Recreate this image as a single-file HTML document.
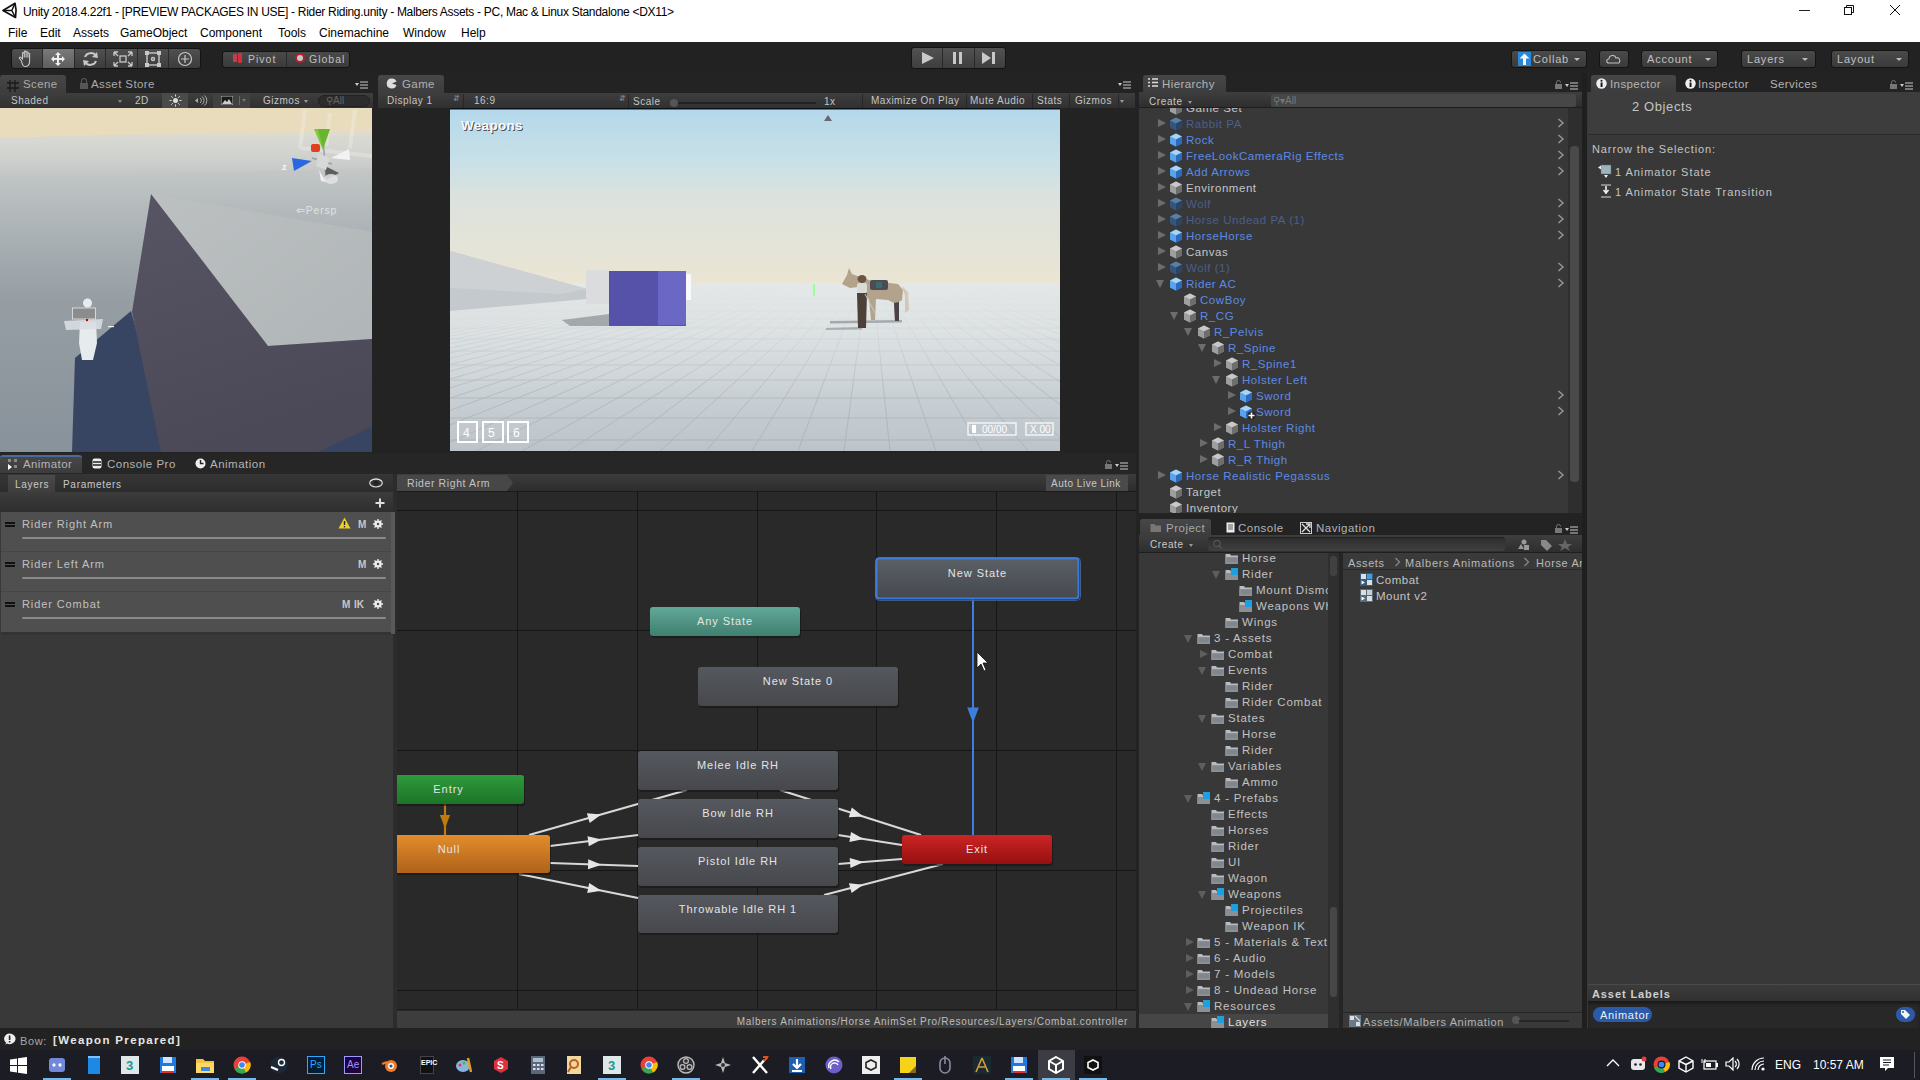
<!DOCTYPE html>
<html><head><meta charset="utf-8">
<style>
*{margin:0;padding:0;box-sizing:border-box}
html,body{width:1920px;height:1080px;overflow:hidden;background:#232323;font-family:"Liberation Sans",sans-serif;font-size:11px;color:#bdbdbd}
.a{position:absolute}
.t{position:absolute;white-space:nowrap;line-height:1}
#title{left:0;top:0;width:1920px;height:22px;background:#fff}
#menu{left:0;top:22px;width:1920px;height:20px;background:#fff}
#toolbar{left:0;top:42px;width:1920px;height:31px;background:#222}
.btn{position:absolute;background:linear-gradient(#4a4a4a,#3a3a3a);border:1px solid #141414;border-radius:3px}
.tab{position:absolute;background:linear-gradient(#444,#383838);border-radius:3px 3px 0 0}
.hrow{position:absolute;height:16px;line-height:19px;white-space:nowrap;font-size:11.5px;letter-spacing:0.55px}
.prow{letter-spacing:0.78px}
.blue{color:#5a8ae6}
.dim{color:#4e6494}
.cube{position:absolute;width:12px;height:12px}
.tri{position:absolute;width:0;height:0}
</style></head><body>

<!-- TITLE BAR -->
<div class="a" id="title">
  <svg class="a" style="left:0;top:0" width="20" height="22"><path d="M3 10.5 L15 3.3 Q17 10.5 15.5 17.5 Z" fill="none" stroke="#111" stroke-width="1.7" stroke-linejoin="round"/><path d="M3 10.5 H11.8 L15 3.3 M11.8 10.5 L15.5 17.5" fill="none" stroke="#111" stroke-width="1.5"/></svg>
  <div class="t" style="left:23px;top:6px;font-size:12px;letter-spacing:-0.3px;color:#000">Unity 2018.4.22f1 - [PREVIEW PACKAGES IN USE] - Rider Riding.unity - Malbers Assets - PC, Mac &amp; Linux Standalone &lt;DX11&gt;</div>
  <div class="a" style="left:1799px;top:10px;width:11px;height:1px;background:#222"></div>
  <svg class="a" style="left:1843px;top:4px" width="12" height="12"><rect x="1.5" y="3.5" width="7" height="7" fill="none" stroke="#111" stroke-width="1"/><path d="M3.5 3.5 V1.5 H10.5 V8.5 H8.5" fill="none" stroke="#111" stroke-width="1"/></svg>
  <svg class="a" style="left:1889px;top:4px" width="12" height="12"><path d="M1 1 L11 11 M11 1 L1 11" stroke="#111" stroke-width="1"/></svg>
</div>
<!-- MENU -->
<div class="a" id="menu">
  <div class="t" style="left:8px;top:5px;font-size:12px;color:#000">File</div>
  <div class="t" style="left:40px;top:5px;font-size:12px;color:#000">Edit</div>
  <div class="t" style="left:73px;top:5px;font-size:12px;color:#000">Assets</div>
  <div class="t" style="left:120px;top:5px;font-size:12px;color:#000">GameObject</div>
  <div class="t" style="left:200px;top:5px;font-size:12px;color:#000">Component</div>
  <div class="t" style="left:278px;top:5px;font-size:12px;color:#000">Tools</div>
  <div class="t" style="left:319px;top:5px;font-size:12px;color:#000">Cinemachine</div>
  <div class="t" style="left:403px;top:5px;font-size:12px;color:#000">Window</div>
  <div class="t" style="left:461px;top:5px;font-size:12px;color:#000">Help</div>
</div>
<!-- TOOLBAR -->
<div class="a" id="toolbar">
  <!-- tools group -->
  <div class="btn" style="left:11px;top:6px;width:190px;height:21px;background:linear-gradient(#505050,#3c3c3c)"></div>
  <div class="a" style="left:43px;top:7px;width:31px;height:19px;background:linear-gradient(#7a7a7a,#5e5e5e)"></div>
  <div class="a" style="left:42px;top:7px;width:1px;height:19px;background:#2a2a2a"></div>
  <div class="a" style="left:74px;top:7px;width:1px;height:19px;background:#2a2a2a"></div>
  <div class="a" style="left:105px;top:7px;width:1px;height:19px;background:#2a2a2a"></div>
  <div class="a" style="left:137px;top:7px;width:1px;height:19px;background:#2a2a2a"></div>
  <div class="a" style="left:168px;top:7px;width:1px;height:19px;background:#2a2a2a"></div>
  <svg class="a" style="left:16px;top:7px" width="180" height="20" viewBox="0 0 180 20">
    <g fill="none" stroke="#c8c8c8" stroke-width="1.1">
      <path d="M5.5 12 L3.5 9.5 C2.8 8.6 4 7.6 4.8 8.4 L6.5 10 L6.5 4.5 C6.5 3.3 8.3 3.3 8.3 4.5 L8.3 8.5 L8.3 3 C8.3 1.8 10.1 1.8 10.1 3 L10.1 8.5 L10.1 3.6 C10.1 2.4 11.9 2.4 11.9 3.6 L11.9 8.8 L11.9 5 C11.9 3.9 13.6 3.9 13.6 5 L13.6 12 C13.6 15.5 11.5 17.5 9 17.5 C7.2 17.5 6.3 16.3 5.5 12Z"/></g>
    <path fill="#eee" transform="translate(-5 0)" d="M40 10 L43 7 L43 9 L46 9 L46 6 L44 6 L47 3 L50 6 L48 6 L48 9 L51 9 L51 7 L54 10 L51 13 L51 11 L48 11 L48 14 L50 14 L47 17 L44 14 L46 14 L46 11 L43 11 L43 13Z"/>
    <g transform="translate(-4 0)"><g fill="none" stroke="#c8c8c8" stroke-width="2"><path d="M73 8 A6 5.5 0 0 1 84 7"/><path d="M84 12 A6 5.5 0 0 1 73 13"/></g>
    <path fill="#c8c8c8" d="M85 3 L86 9 L80 8Z M72 17 L71 11 L77 12Z"/></g>
    <g fill="none" stroke="#c8c8c8" stroke-width="1.3"><rect x="104" y="7" width="6" height="6"/><path d="M98 3 L102 3 M98 3 L98 7 M98 3 L102 7 M116 3 L112 3 M116 3 L116 7 M116 3 L112 7 M98 17 L102 17 M98 17 L98 13 M98 17 L102 13 M116 17 L112 17 M116 17 L116 13 M116 17 L112 13"/></g>
    <g fill="none" stroke="#c8c8c8" stroke-width="1.4"><rect x="131" y="4" width="12" height="12"/><circle cx="137" cy="10" r="1.5"/></g>
    <g fill="#c8c8c8"><rect x="129" y="2" width="4" height="4"/><rect x="141" y="2" width="4" height="4"/><rect x="129" y="14" width="4" height="4"/><rect x="141" y="14" width="4" height="4"/></g>
    <g fill="none" stroke="#c8c8c8" stroke-width="1.2"><circle cx="169" cy="10" r="6.5"/><path d="M169 6 L169 14 M165 10 L173 10"/></g>
  </svg>
  <!-- pivot global -->
  <div class="btn" style="left:222px;top:9px;width:128px;height:17px"></div>
  <div class="a" style="left:286px;top:10px;width:1px;height:15px;background:#2a2a2a"></div>
  <div class="a" style="left:233px;top:12px;width:4px;height:8px;background:#c04050;border-radius:1px"></div>
  <div class="a" style="left:238px;top:11px;width:4px;height:10px;background:#d03040;border-radius:1px"></div>
  <div class="t" style="left:248px;top:12px;font-size:10.5px;color:#c0c0c0;letter-spacing:1px">Pivot</div>
  <div class="a" style="left:295px;top:11px;width:10px;height:10px;border-radius:50%;background:#c8c8c8;border:2px solid #b02030"></div>
  <div class="t" style="left:309px;top:12px;font-size:10.5px;color:#c0c0c0;letter-spacing:1px">Global</div>
  <!-- play -->
  <div class="btn" style="left:911px;top:5px;width:95px;height:22px;background:linear-gradient(#525252,#3e3e3e)"></div>
  <div class="a" style="left:942px;top:6px;width:1px;height:20px;background:#2a2a2a"></div>
  <div class="a" style="left:974px;top:6px;width:1px;height:20px;background:#2a2a2a"></div>
  <svg class="a" style="left:911px;top:5px" width="95" height="22"><path d="M11 5 L23 11 L11 17Z" fill="#c8c8c8"/><rect x="42" y="5" width="3" height="12" fill="#c8c8c8"/><rect x="48" y="5" width="3" height="12" fill="#c8c8c8"/><path d="M71 5 L80 11 L71 17Z" fill="#c8c8c8"/><rect x="81" y="5" width="3" height="12" fill="#c8c8c8"/></svg>
  <!-- right buttons -->
  <div class="btn" style="left:1511px;top:8px;width:76px;height:18px"></div>
  <svg class="a" style="left:1518px;top:10px" width="13" height="14"><rect x="0" y="0" width="13" height="14" fill="#2a86d6"/><path d="M6.5 1.5 L11.5 6.5 L8 6.5 L8 13 L5 13 L5 6.5 L1.5 6.5Z" fill="#f4f8fc"/></svg>
  <div class="t" style="left:1533px;top:12px;font-size:11px;color:#c0c0c0;letter-spacing:0.8px">Collab</div>
  <div class="tri" style="left:1574px;top:16px;border-left:3px solid transparent;border-right:3px solid transparent;border-top:3px solid #bbb"></div>
  <div class="btn" style="left:1599px;top:8px;width:30px;height:18px"></div>
  <svg class="a" style="left:1604px;top:10px" width="20" height="14"><path d="M5 11 C2 11 2 7 5 7 C5 3 11 2 12 6 C15 5 17 8 15 11Z" fill="none" stroke="#c0c0c0" stroke-width="1.1"/></svg>
  <div class="btn" style="left:1641px;top:8px;width:77px;height:18px"></div>
  <div class="t" style="left:1647px;top:12px;font-size:11px;color:#c0c0c0;letter-spacing:0.8px">Account</div>
  <div class="tri" style="left:1705px;top:16px;border-left:3px solid transparent;border-right:3px solid transparent;border-top:3px solid #bbb"></div>
  <div class="btn" style="left:1741px;top:8px;width:75px;height:18px"></div>
  <div class="t" style="left:1747px;top:12px;font-size:11px;color:#c0c0c0;letter-spacing:0.8px">Layers</div>
  <div class="tri" style="left:1802px;top:16px;border-left:3px solid transparent;border-right:3px solid transparent;border-top:3px solid #bbb"></div>
  <div class="btn" style="left:1831px;top:8px;width:78px;height:18px"></div>
  <div class="t" style="left:1837px;top:12px;font-size:11px;color:#c0c0c0;letter-spacing:0.8px">Layout</div>
  <div class="tri" style="left:1896px;top:16px;border-left:3px solid transparent;border-right:3px solid transparent;border-top:3px solid #bbb"></div>
</div>

<!-- SCENE PANEL -->
<div class="a" style="left:0;top:73px;width:373px;height:380px;background:#232323">
  <div class="tab" style="left:0;top:2px;width:66px;height:19px;background:linear-gradient(#474747,#3c3c3c)"></div>
  <svg class="a" style="left:7px;top:7px" width="12" height="12"><path d="M3 0 V12 M8 0 V12 M0 3 H12 M0 8 H12" stroke="#1a1a1a" stroke-width="1.3"/></svg>
  <div class="t" style="left:23px;top:6px;font-size:11.5px;color:#aaa;letter-spacing:0.4px">Scene</div>
  <svg class="a" style="left:79px;top:5px" width="10" height="11"><rect x="1" y="5" width="8" height="6" fill="#555"/><path d="M2.5 5 V3 A2.5 2.5 0 0 1 7.5 3 V5" fill="none" stroke="#555" stroke-width="1.2"/></svg>
  <div class="t" style="left:91px;top:6px;font-size:11.5px;color:#aaa;letter-spacing:0.4px">Asset Store</div>
  <svg class="a" style="left:355px;top:8px" width="14" height="8"><path d="M0 2 L4 2 L2 5Z" fill="#ccc"/><path d="M5 1 H13 M5 4 H13 M5 7 H13" stroke="#ccc" stroke-width="1.2"/></svg>
  <!-- scene toolbar -->
  <div class="a" style="left:0;top:20px;width:373px;height:15px;background:linear-gradient(#3e3e3e,#303030)"></div>
  <div class="t" style="left:11px;top:23px;font-size:10px;color:#c4c4c4;letter-spacing:0.5px">Shaded</div>
  <div class="tri" style="left:118px;top:27px;border-left:2.5px solid transparent;border-right:2.5px solid transparent;border-top:3px solid #888"></div>
  <div class="t" style="left:135px;top:23px;font-size:10px;color:#c4c4c4;letter-spacing:0.5px">2D</div>
  <div class="a" style="left:162px;top:20px;width:26px;height:15px;background:#4a4a4a"></div>
  <svg class="a" style="left:169px;top:21px" width="13" height="13"><circle cx="6.5" cy="6.5" r="2.5" fill="#ddd"/><path d="M6.5 0.5 V2.5 M6.5 10.5 V12.5 M0.5 6.5 H2.5 M10.5 6.5 H12.5 M2.3 2.3 L3.7 3.7 M9.3 9.3 L10.7 10.7 M2.3 10.7 L3.7 9.3 M9.3 3.7 L10.7 2.3" stroke="#ddd" stroke-width="1"/></svg>
  <svg class="a" style="left:194px;top:22px" width="14" height="11"><path d="M1 5.5 L4 3 V8Z" fill="#aaa"/><path d="M6 3 A3 3 0 0 1 6 8 M8 1.5 A5 5 0 0 1 8 9.5 M10.5 0.5 A6.5 6.5 0 0 1 10.5 10.5" fill="none" stroke="#aaa" stroke-width="1"/></svg>
  <div class="a" style="left:213px;top:20px;width:37px;height:15px;background:#414141"></div>
  <svg class="a" style="left:221px;top:23px" width="12" height="9"><rect x="0" y="0" width="12" height="9" fill="#1a1a1a" stroke="#bbb" stroke-width="1"/><path d="M1 8 L4 4 L6 6 L8 3 L11 8Z" fill="#ccc"/></svg>
  <div class="a" style="left:239px;top:23px;width:1px;height:9px;background:#666"></div>
  <div class="tri" style="left:242px;top:26px;border-left:2.5px solid transparent;border-right:2.5px solid transparent;border-top:3px solid #777"></div>
  <div class="t" style="left:263px;top:23px;font-size:10px;color:#c4c4c4;letter-spacing:0.5px">Gizmos</div>
  <div class="tri" style="left:304px;top:27px;border-left:2.5px solid transparent;border-right:2.5px solid transparent;border-top:3px solid #999"></div>
  <div class="a" style="left:318px;top:22px;width:52px;height:12px;background:#2c2c2c;border-radius:6px;border:1px solid #222"></div>
  <div class="t" style="left:326px;top:23px;font-size:10px;color:#666">&#9906;All</div>
</div>
<!-- scene view -->
<svg class="a" style="left:0;top:108px" width="372" height="344" viewBox="0 0 372 344">
  <defs>
    <linearGradient id="sky" x1="0" y1="0" x2="0" y2="1">
      <stop offset="0" stop-color="#e9ddbd"/><stop offset="0.07" stop-color="#e8dcc0"/><stop offset="0.085" stop-color="#d4d6d2"/><stop offset="0.2" stop-color="#c0c4c4"/><stop offset="0.4" stop-color="#a6aeb2"/><stop offset="0.56" stop-color="#969ea4"/><stop offset="1" stop-color="#88929a"/>
    </linearGradient>
    <linearGradient id="topf" x1="0" y1="0" x2="1" y2="1"><stop offset="0" stop-color="#bcc0c1"/><stop offset="1" stop-color="#b0b5b7"/></linearGradient><linearGradient id="darkf" x1="0" y1="0" x2="0.3" y2="1"><stop offset="0" stop-color="#575563"/><stop offset="1" stop-color="#4b4957"/></linearGradient>
  </defs>
  <rect width="373" height="344" fill="url(#sky)"/>
  <polygon points="0,0 373,0 373,19.5 0,30" fill="#e8dcbc"/>
  <linearGradient id="haze" x1="0" y1="0" x2="0" y2="1"><stop offset="0" stop-color="#dcdcd4"/><stop offset="1" stop-color="#dcdcd4" stop-opacity="0"/></linearGradient>
  <polygon points="0,30 373,23 373,60 0,70" fill="url(#haze)" opacity="0.6"/>
  <polygon points="151,86 373,124 373,231 268,238" fill="url(#topf)"/>
  <polygon points="131,203 170,344 72,344 75,250" fill="#374563"/>
  <polygon points="151,86 268,238 373,231 373,344 161,344 132,204" fill="url(#darkf)"/>
  <polygon points="318,344 373,318 373,344" fill="#374563"/>
  <!-- character -->
  <ellipse cx="87.5" cy="195" rx="4.5" ry="4.5" fill="#e8ecee"/>
  <path d="M80 214 L96 214 L97 235 L93 252 L82 252 L79 235Z" fill="#e6ecee"/>
  <polygon points="64,213 103,211 101,221 66,222" fill="#d8dee2" opacity="0.9"/>
  <rect x="72.5" y="200" width="23" height="11" fill="#8c8c8c" stroke="#e8e8e8" stroke-width="0.8"/>
  <circle cx="87" cy="212" r="1.2" fill="#b00"/>
  <rect x="108" y="218" width="6" height="1.2" fill="#f0f0f0"/>
  <!-- gizmo -->
  <path d="M305 2 L300 40 M330 5 L326 38 M355 2 L350 40 M300 40 L373 48" stroke="#f4f2ea" stroke-width="4" fill="none" opacity="0.35"/>
  <path d="M323 30 L326 70 M312 50 L332 56" stroke="#9aa0a4" stroke-width="1.5"/>
  <polygon points="314,21 330,21 323,42" fill="#7ec83a"/>
  <polygon points="318,21 330,21 323,40" fill="#5aa828" opacity="0.6"/>
  <rect x="311" y="36" width="9" height="8" rx="2" fill="#e0401c"/>
  <polygon points="292,50 312,53 294,63" fill="#2a68e0"/>
  <polygon points="331,50 349,41 350,52" fill="#f2f2f2"/>
  <polygon points="325,58 339,65 326,72" fill="#5e5e5e"/>
  <polygon points="319,62 326,74 321,73" fill="#f0f0f0"/>
  <ellipse cx="331" cy="71" rx="7" ry="5" fill="#e4e4e4" opacity="0.85"/>
  <polygon points="318,45 330,50 326,62 316,58" fill="#d6d8da"/>
  <text x="282" y="62" font-size="9" font-weight="bold" fill="#f4f4f4" font-family="Liberation Sans">z</text>
  <text x="296" y="106" font-size="10.5" fill="#dfe2e4" letter-spacing="0.8" font-family="Liberation Sans">&#8656;Persp</text>
</svg>

<!-- GAME PANEL -->
<div class="a" style="left:378px;top:73px;width:757px;height:380px;background:#232323">
  <div class="tab" style="left:0;top:2px;width:66px;height:19px;background:linear-gradient(#474747,#3c3c3c)"></div>
  <svg class="a" style="left:8px;top:5px" width="11" height="11"><path d="M5.5 0.5 A5 5 0 1 0 10.5 7 L6 5.5 L10.5 3.5 A5 5 0 0 0 5.5 0.5Z" fill="#ddd"/></svg>
  <div class="t" style="left:24px;top:6px;font-size:11.5px;color:#b0b0b0;letter-spacing:0.4px">Game</div>
  <svg class="a" style="left:740px;top:8px" width="14" height="8"><path d="M0 2 L4 2 L2 5Z" fill="#ccc"/><path d="M5 1 H13 M5 4 H13 M5 7 H13" stroke="#ccc" stroke-width="1.2"/></svg>
  <div class="a" style="left:0;top:20px;width:757px;height:15px;background:linear-gradient(#3e3e3e,#303030)"></div>
  <div class="t" style="left:9px;top:23px;font-size:10px;color:#c4c4c4;letter-spacing:0.5px">Display 1</div>
  <div class="t" style="left:75px;top:22px;font-size:8px;color:#888">&#8693;</div>
  <div class="t" style="left:96px;top:23px;font-size:10px;color:#c4c4c4;letter-spacing:0.5px">16:9</div>
  <div class="t" style="left:241px;top:22px;font-size:8px;color:#888">&#8693;</div>
  <div class="t" style="left:255px;top:24px;font-size:10px;color:#c4c4c4;letter-spacing:0.5px">Scale</div>
  <div class="a" style="left:292px;top:26px;width:8px;height:8px;border-radius:50%;background:#555"></div>
  <div class="a" style="left:300px;top:29px;width:138px;height:2px;background:#222"></div>
  <div class="t" style="left:446px;top:24px;font-size:10px;color:#c4c4c4;letter-spacing:0.5px">1x</div>
  <div class="t" style="left:493px;top:23px;font-size:10px;color:#c4c4c4;letter-spacing:0.5px">Maximize On Play</div>
  <div class="t" style="left:592px;top:23px;font-size:10px;color:#c4c4c4;letter-spacing:0.5px">Mute Audio</div>
  <div class="t" style="left:659px;top:23px;font-size:10px;color:#c4c4c4;letter-spacing:0.5px">Stats</div>
  <div class="t" style="left:697px;top:23px;font-size:10px;color:#c4c4c4;letter-spacing:0.5px">Gizmos</div>
  <div class="tri" style="left:742px;top:27px;border-left:2.5px solid transparent;border-right:2.5px solid transparent;border-top:3px solid #999"></div>
<div class="a" style="left:85px;top:21px;width:1px;height:14px;background:#262626"></div><div class="a" style="left:250px;top:21px;width:1px;height:14px;background:#262626"></div><div class="a" style="left:484px;top:21px;width:1px;height:14px;background:#262626"></div><div class="a" style="left:588px;top:21px;width:1px;height:14px;background:#262626"></div><div class="a" style="left:654px;top:21px;width:1px;height:14px;background:#262626"></div><div class="a" style="left:691px;top:21px;width:1px;height:14px;background:#262626"></div><div class="a" style="left:740px;top:21px;width:1px;height:14px;background:#262626"></div>
</div>
<!-- game view -->
<svg class="a" style="left:450px;top:108px" width="610" height="343" viewBox="0 0 610 343">
  <defs>
    <linearGradient id="gsky" x1="0" y1="0" x2="0" y2="1">
      <stop offset="0" stop-color="#b3d8ea"/><stop offset="0.3" stop-color="#c8e0e8"/><stop offset="0.5" stop-color="#dbe2de"/><stop offset="0.5" stop-color="#dbe2de"/><stop offset="1" stop-color="#ebe5d3"/>
    </linearGradient>
    <linearGradient id="ground" x1="0" y1="0" x2="0" y2="1">
      <stop offset="0" stop-color="#e2e6e6"/><stop offset="0.3" stop-color="#d8dddf"/><stop offset="1" stop-color="#bcc4ca"/>
    </linearGradient>
    <clipPath id="gclip"><rect x="0" y="176" width="610" height="167"/></clipPath>
  </defs>
  <rect width="610" height="176" fill="url(#gsky)"/>
  <rect y="175" width="610" height="168" fill="url(#ground)"/>
  <g clip-path="url(#gclip)" stroke="#98a0a6" fill="none" opacity="0.5" stroke-width="0.8">
    <path d="M420 150 L-1400 343 M420 150 L-1354 343 M420 150 L-1308 343 M420 150 L-1262 343 M420 150 L-1216 343 M420 150 L-1170 343 M420 150 L-1124 343 M420 150 L-1078 343 M420 150 L-1032 343 M420 150 L-986 343 M420 150 L-940 343 M420 150 L-894 343 M420 150 L-848 343 M420 150 L-802 343 M420 150 L-756 343 M420 150 L-710 343 M420 150 L-664 343 M420 150 L-618 343 M420 150 L-572 343 M420 150 L-526 343 M420 150 L-480 343 M420 150 L-434 343 M420 150 L-388 343 M420 150 L-342 343 M420 150 L-296 343 M420 150 L-250 343 M420 150 L-204 343 M420 150 L-158 343 M420 150 L-112 343 M420 150 L-66 343 M420 150 L-20 343 M420 150 L26 343 M420 150 L72 343 M420 150 L118 343 M420 150 L164 343 M420 150 L210 343 M420 150 L256 343 M420 150 L302 343 M420 150 L348 343 M420 150 L394 343 M420 150 L440 343 M420 150 L486 343 M420 150 L532 343 M420 150 L578 343 M420 150 L624 343 M420 150 L670 343 M420 150 L716 343 M420 150 L762 343 M420 150 L808 343 M420 150 L854 343 M420 150 L900 343 M420 150 L946 343 M420 150 L992 343 M420 150 L1038 343 M420 150 L1084 343 M420 150 L1130 343 M420 150 L1176 343 M420 150 L1222 343 M420 150 L1268 343 M420 150 L1314 343 M420 150 L1360 343 M420 150 L1406 343 M420 150 L1452 343 M420 150 L1498 343 M420 150 L1544 343 M420 150 L1590 343 M420 150 L1636 343 M420 150 L1682 343 M420 150 L1728 343 M420 150 L1774 343 M420 150 L1820 343 M420 150 L1866 343 M420 150 L1912 343 M420 150 L1958 343"/>
    <path d="M0 190 H610 M0 196 H610 M0 203 H610 M0 211 H610 M0 220 H610 M0 231 H610 M0 243 H610 M0 257 H610 M0 272 H610 M0 290 H610 M0 310 H610 M0 332 H610"/>
  </g>
  <linearGradient id="fog" x1="0" y1="0" x2="0" y2="1"><stop offset="0" stop-color="#e4e8e8" stop-opacity="1"/><stop offset="0.35" stop-color="#e0e4e5" stop-opacity="0.8"/><stop offset="1" stop-color="#d8dde0" stop-opacity="0"/></linearGradient>
  <rect x="0" y="175" width="610" height="110" fill="url(#fog)"/>
  <polygon points="0,143 137,181 137,191 0,203" fill="#c4c9cd"/>
  <polygon points="0,143 137,181 110,186 0,180" fill="#cdd1d4"/>
  <rect x="136" y="162" width="24" height="34" fill="#dadcdd"/>
  <polygon points="112,212 159,206 159,218 120,218" fill="#6a7076" opacity="0.5"/>
  <rect x="159" y="163" width="77" height="55" fill="#5652aa"/>
  <rect x="208" y="163" width="28" height="54" fill="#6a68c4"/>
  <rect x="236" y="166" width="5" height="26" fill="#fafafa"/>
  <!-- horse + rider -->
  <path d="M380 213 L452 212 L452 214.5 L380 215.5Z" fill="#6a7078" opacity="0.5"/>
  <path d="M376 220 L412 219 L412 221.5 L376 222Z" fill="#6a7078" opacity="0.45"/>
  <path d="M392 176 L397 167 L399 160 L402 166 L410 169 L422 173 L448 176 L453 182 L452 192 L449 194 L449 213 L445 213 L444 195 L438 192 L426 191 L425 212 L421 212 L419 191 L414 188 L408 179 L400 180Z" fill="#b3a38c"/>
  <path d="M452 178 L458 184 L459 202 L455 205 L455 188Z" fill="#d4c8b4"/>
  <path d="M444 195 L449 194 L449 213 L445 213Z" fill="#4a4448"/>
  <rect x="420" y="172" width="18" height="10" rx="2" fill="#4c4c54"/>
  <rect x="426" y="174" width="6" height="6" fill="#3a6a70"/>
  <ellipse cx="412" cy="171" rx="4.5" ry="4" fill="#6a5444"/>
  <rect x="407" y="175" width="10" height="10" rx="2" fill="#d8dcd6"/>
  <path d="M407 185 L417 185 L416 220 L408 220Z" fill="#4c4038"/>
  <path d="M415 186 L425 205" stroke="#c8c8c0" stroke-width="1"/>
  <rect x="363" y="176" width="2" height="12" fill="#9f9"/>
  <text x="12" y="22.5" font-size="13.5" font-weight="bold" fill="#4a5058" letter-spacing="0.3" font-family="Liberation Sans">Weapons</text><text x="11" y="21.5" font-size="13.5" font-weight="bold" fill="#fafafa" letter-spacing="0.3" font-family="Liberation Sans">Weapons</text><rect x="0" y="0" width="610" height="1.5" fill="#0a1018"/>
  <path d="M378 7 L382 13 L374 13Z" fill="#667"/>
  <g fill="none" stroke="#fff" stroke-width="2"><rect x="8" y="314" width="19" height="20"/><rect x="33" y="314" width="20" height="20"/><rect x="58" y="314" width="20" height="20"/></g>
  <g font-family="Liberation Sans" font-size="12" fill="#fff"><text x="13" y="329">4</text><text x="38" y="329">5</text><text x="63" y="329">6</text></g>
  <g fill="none" stroke="#fff" stroke-width="1.2"><rect x="518" y="315" width="48" height="12"/><rect x="576" y="315" width="27" height="12"/></g>
  <g font-family="Liberation Sans" font-size="10" fill="#fff"><text x="532" y="325">00/00</text><text x="580" y="325">X 00</text></g>
  <rect x="522" y="317" width="4" height="8" fill="#fff"/>
</svg>

<!-- SVG DEFS -->
<svg width="0" height="0" style="position:absolute">
  <defs>
    <g id="cb"><path d="M7 0.5 L13 3.5 L13 10.5 L7 13.5 L1 10.5 L1 3.5Z" fill="#3e86d8"/><path d="M7 0.5 L13 3.5 L7 6.5 L1 3.5Z" fill="#a8d4f8"/><path d="M7 6.5 L13 3.5 L13 10.5 L7 13.5Z" fill="#2c6cc0"/><path d="M1 3.5 L7 6.5 L7 13.5 L1 10.5Z" fill="#5aa2ea"/></g>
    <g id="cd"><path d="M7 0.5 L13 3.5 L13 10.5 L7 13.5 L1 10.5 L1 3.5Z" fill="#34557c"/><path d="M7 0.5 L13 3.5 L7 6.5 L1 3.5Z" fill="#5d7ea4"/><path d="M7 6.5 L13 3.5 L13 10.5 L7 13.5Z" fill="#2a4466"/></g>
    <g id="cg"><path d="M7 0.5 L13 3.5 L13 10.5 L7 13.5 L1 10.5 L1 3.5Z" fill="#8e8e8e"/><path d="M7 0.5 L13 3.5 L7 6.5 L1 3.5Z" fill="#c8c8c8"/><path d="M7 6.5 L13 3.5 L13 10.5 L7 13.5Z" fill="#6e6e6e"/><path d="M1 3.5 L7 6.5 L7 13.5 L1 10.5Z" fill="#9e9e9e"/></g>
  </defs>
</svg>
<!-- HIERARCHY -->
<div class="a" style="left:1139px;top:73px;width:443px;height:441px;background:#383838;overflow:hidden">
  <div class="a" style="left:0;top:0;width:443px;height:19px;background:#232323"></div>
  <div class="tab" style="left:4px;top:2px;width:83px;height:18px;background:linear-gradient(#474747,#3c3c3c)"></div>
  <svg class="a" style="left:9px;top:5px" width="11" height="10"><path d="M0 1 H2 M4 1 H10 M0 4.5 H2 M4 4.5 H10 M0 8 H2 M4 8 H10" stroke="#ddd" stroke-width="1.4"/></svg>
  <div class="t" style="left:23px;top:6px;font-size:11.5px;color:#b4b4b4;letter-spacing:0.4px">Hierarchy</div>
  <svg class="a" style="left:414px;top:7px" width="26" height="10"><rect x="2" y="4" width="7" height="5" fill="#777"/><path d="M3.5 4 V2.5 A2 2 0 0 1 7.5 2.5" fill="none" stroke="#777" stroke-width="1"/><path d="M12 4 L16 4 L14 7Z" fill="#ccc"/><path d="M17 3 H25 M17 6 H25 M17 9 H25" stroke="#ccc" stroke-width="1.2"/></svg>
  <div class="a" style="left:0;top:19px;width:443px;height:16px;background:linear-gradient(#3e3e3e,#2e2e2e);border-bottom:1px solid #1e1e1e"></div>
  <svg class="a" style="left:30px;top:28px" width="14" height="14"><use href="#cg"/></svg>
  <div class="hrow" style="left:47px;top:26px;color:#c6c6c6">Game Set</div>
  <div class="tri" style="left:19px;top:46px;border-top:4.5px solid transparent;border-bottom:4.5px solid transparent;border-left:8px solid #6c6c6c"></div>
  <svg class="a" style="left:30px;top:44px" width="14" height="14"><use href="#cd"/></svg>
  <div class="hrow" style="left:47px;top:42px;color:#4a5f8c">Rabbit PA</div>
  <svg class="a" style="left:418px;top:45px" width="8" height="10"><path d="M1.5 1 L6 5 L1.5 9" fill="none" stroke="#9a9a9a" stroke-width="1.4"/></svg>
  <div class="tri" style="left:19px;top:62px;border-top:4.5px solid transparent;border-bottom:4.5px solid transparent;border-left:8px solid #6c6c6c"></div>
  <svg class="a" style="left:30px;top:60px" width="14" height="14"><use href="#cb"/></svg>
  <div class="hrow" style="left:47px;top:58px;color:#5b8ae4">Rock</div>
  <svg class="a" style="left:418px;top:61px" width="8" height="10"><path d="M1.5 1 L6 5 L1.5 9" fill="none" stroke="#9a9a9a" stroke-width="1.4"/></svg>
  <div class="tri" style="left:19px;top:78px;border-top:4.5px solid transparent;border-bottom:4.5px solid transparent;border-left:8px solid #6c6c6c"></div>
  <svg class="a" style="left:30px;top:76px" width="14" height="14"><use href="#cb"/></svg>
  <div class="hrow" style="left:47px;top:74px;color:#5b8ae4">FreeLookCameraRig Effects</div>
  <svg class="a" style="left:418px;top:77px" width="8" height="10"><path d="M1.5 1 L6 5 L1.5 9" fill="none" stroke="#9a9a9a" stroke-width="1.4"/></svg>
  <div class="tri" style="left:19px;top:94px;border-top:4.5px solid transparent;border-bottom:4.5px solid transparent;border-left:8px solid #6c6c6c"></div>
  <svg class="a" style="left:30px;top:92px" width="14" height="14"><use href="#cb"/></svg>
  <div class="hrow" style="left:47px;top:90px;color:#5b8ae4">Add Arrows</div>
  <svg class="a" style="left:418px;top:93px" width="8" height="10"><path d="M1.5 1 L6 5 L1.5 9" fill="none" stroke="#9a9a9a" stroke-width="1.4"/></svg>
  <div class="tri" style="left:19px;top:110px;border-top:4.5px solid transparent;border-bottom:4.5px solid transparent;border-left:8px solid #6c6c6c"></div>
  <svg class="a" style="left:30px;top:108px" width="14" height="14"><use href="#cg"/></svg>
  <div class="hrow" style="left:47px;top:106px;color:#c6c6c6">Environment</div>
  <div class="tri" style="left:19px;top:126px;border-top:4.5px solid transparent;border-bottom:4.5px solid transparent;border-left:8px solid #6c6c6c"></div>
  <svg class="a" style="left:30px;top:124px" width="14" height="14"><use href="#cd"/></svg>
  <div class="hrow" style="left:47px;top:122px;color:#4a5f8c">Wolf</div>
  <svg class="a" style="left:418px;top:125px" width="8" height="10"><path d="M1.5 1 L6 5 L1.5 9" fill="none" stroke="#9a9a9a" stroke-width="1.4"/></svg>
  <div class="tri" style="left:19px;top:142px;border-top:4.5px solid transparent;border-bottom:4.5px solid transparent;border-left:8px solid #6c6c6c"></div>
  <svg class="a" style="left:30px;top:140px" width="14" height="14"><use href="#cd"/></svg>
  <div class="hrow" style="left:47px;top:138px;color:#4a5f8c">Horse Undead PA (1)</div>
  <svg class="a" style="left:418px;top:141px" width="8" height="10"><path d="M1.5 1 L6 5 L1.5 9" fill="none" stroke="#9a9a9a" stroke-width="1.4"/></svg>
  <div class="tri" style="left:19px;top:158px;border-top:4.5px solid transparent;border-bottom:4.5px solid transparent;border-left:8px solid #6c6c6c"></div>
  <svg class="a" style="left:30px;top:156px" width="14" height="14"><use href="#cb"/></svg>
  <div class="hrow" style="left:47px;top:154px;color:#5b8ae4">HorseHorse</div>
  <svg class="a" style="left:418px;top:157px" width="8" height="10"><path d="M1.5 1 L6 5 L1.5 9" fill="none" stroke="#9a9a9a" stroke-width="1.4"/></svg>
  <div class="tri" style="left:19px;top:174px;border-top:4.5px solid transparent;border-bottom:4.5px solid transparent;border-left:8px solid #6c6c6c"></div>
  <svg class="a" style="left:30px;top:172px" width="14" height="14"><use href="#cg"/></svg>
  <div class="hrow" style="left:47px;top:170px;color:#c6c6c6">Canvas</div>
  <div class="tri" style="left:19px;top:190px;border-top:4.5px solid transparent;border-bottom:4.5px solid transparent;border-left:8px solid #6c6c6c"></div>
  <svg class="a" style="left:30px;top:188px" width="14" height="14"><use href="#cd"/></svg>
  <div class="hrow" style="left:47px;top:186px;color:#4a5f8c">Wolf (1)</div>
  <svg class="a" style="left:418px;top:189px" width="8" height="10"><path d="M1.5 1 L6 5 L1.5 9" fill="none" stroke="#9a9a9a" stroke-width="1.4"/></svg>
  <div class="tri" style="left:17px;top:207px;border-left:4.5px solid transparent;border-right:4.5px solid transparent;border-top:8px solid #6c6c6c"></div>
  <svg class="a" style="left:30px;top:204px" width="14" height="14"><use href="#cb"/></svg>
  <div class="hrow" style="left:47px;top:202px;color:#5b8ae4">Rider AC</div>
  <svg class="a" style="left:418px;top:205px" width="8" height="10"><path d="M1.5 1 L6 5 L1.5 9" fill="none" stroke="#9a9a9a" stroke-width="1.4"/></svg>
  <svg class="a" style="left:44px;top:220px" width="14" height="14"><use href="#cg"/></svg>
  <div class="hrow" style="left:61px;top:218px;color:#5b8ae4">CowBoy</div>
  <div class="tri" style="left:31px;top:239px;border-left:4.5px solid transparent;border-right:4.5px solid transparent;border-top:8px solid #6c6c6c"></div>
  <svg class="a" style="left:44px;top:236px" width="14" height="14"><use href="#cg"/></svg>
  <div class="hrow" style="left:61px;top:234px;color:#5b8ae4">R_CG</div>
  <div class="tri" style="left:45px;top:255px;border-left:4.5px solid transparent;border-right:4.5px solid transparent;border-top:8px solid #6c6c6c"></div>
  <svg class="a" style="left:58px;top:252px" width="14" height="14"><use href="#cg"/></svg>
  <div class="hrow" style="left:75px;top:250px;color:#5b8ae4">R_Pelvis</div>
  <div class="tri" style="left:59px;top:271px;border-left:4.5px solid transparent;border-right:4.5px solid transparent;border-top:8px solid #6c6c6c"></div>
  <svg class="a" style="left:72px;top:268px" width="14" height="14"><use href="#cg"/></svg>
  <div class="hrow" style="left:89px;top:266px;color:#5b8ae4">R_Spine</div>
  <div class="tri" style="left:75px;top:286px;border-top:4.5px solid transparent;border-bottom:4.5px solid transparent;border-left:8px solid #6c6c6c"></div>
  <svg class="a" style="left:86px;top:284px" width="14" height="14"><use href="#cg"/></svg>
  <div class="hrow" style="left:103px;top:282px;color:#5b8ae4">R_Spine1</div>
  <div class="tri" style="left:73px;top:303px;border-left:4.5px solid transparent;border-right:4.5px solid transparent;border-top:8px solid #6c6c6c"></div>
  <svg class="a" style="left:86px;top:300px" width="14" height="14"><use href="#cg"/></svg>
  <div class="hrow" style="left:103px;top:298px;color:#5b8ae4">Holster Left</div>
  <div class="tri" style="left:89px;top:318px;border-top:4.5px solid transparent;border-bottom:4.5px solid transparent;border-left:8px solid #6c6c6c"></div>
  <svg class="a" style="left:100px;top:316px" width="14" height="14"><use href="#cb"/></svg>
  <div class="hrow" style="left:117px;top:314px;color:#5b8ae4">Sword</div>
  <svg class="a" style="left:418px;top:317px" width="8" height="10"><path d="M1.5 1 L6 5 L1.5 9" fill="none" stroke="#9a9a9a" stroke-width="1.4"/></svg>
  <div class="tri" style="left:89px;top:334px;border-top:4.5px solid transparent;border-bottom:4.5px solid transparent;border-left:8px solid #6c6c6c"></div>
  <svg class="a" style="left:100px;top:332px" width="14" height="14"><use href="#cb"/></svg>
  <svg class="a" style="left:108px;top:338px" width="9" height="9"><circle cx="4.5" cy="4.5" r="4" fill="#222"/><path d="M4.5 1.5 V7.5 M1.5 4.5 H7.5" stroke="#fff" stroke-width="1.6"/></svg>
  <div class="hrow" style="left:117px;top:330px;color:#5b8ae4">Sword</div>
  <svg class="a" style="left:418px;top:333px" width="8" height="10"><path d="M1.5 1 L6 5 L1.5 9" fill="none" stroke="#9a9a9a" stroke-width="1.4"/></svg>
  <div class="tri" style="left:75px;top:350px;border-top:4.5px solid transparent;border-bottom:4.5px solid transparent;border-left:8px solid #6c6c6c"></div>
  <svg class="a" style="left:86px;top:348px" width="14" height="14"><use href="#cg"/></svg>
  <div class="hrow" style="left:103px;top:346px;color:#5b8ae4">Holster Right</div>
  <div class="tri" style="left:61px;top:366px;border-top:4.5px solid transparent;border-bottom:4.5px solid transparent;border-left:8px solid #6c6c6c"></div>
  <svg class="a" style="left:72px;top:364px" width="14" height="14"><use href="#cg"/></svg>
  <div class="hrow" style="left:89px;top:362px;color:#5b8ae4">R_L Thigh</div>
  <div class="tri" style="left:61px;top:382px;border-top:4.5px solid transparent;border-bottom:4.5px solid transparent;border-left:8px solid #6c6c6c"></div>
  <svg class="a" style="left:72px;top:380px" width="14" height="14"><use href="#cg"/></svg>
  <div class="hrow" style="left:89px;top:378px;color:#5b8ae4">R_R Thigh</div>
  <div class="tri" style="left:19px;top:398px;border-top:4.5px solid transparent;border-bottom:4.5px solid transparent;border-left:8px solid #6c6c6c"></div>
  <svg class="a" style="left:30px;top:396px" width="14" height="14"><use href="#cb"/></svg>
  <div class="hrow" style="left:47px;top:394px;color:#5b8ae4">Horse Realistic Pegassus</div>
  <svg class="a" style="left:418px;top:397px" width="8" height="10"><path d="M1.5 1 L6 5 L1.5 9" fill="none" stroke="#9a9a9a" stroke-width="1.4"/></svg>
  <svg class="a" style="left:30px;top:412px" width="14" height="14"><use href="#cg"/></svg>
  <div class="hrow" style="left:47px;top:410px;color:#c6c6c6">Target</div>
  <svg class="a" style="left:30px;top:428px" width="14" height="14"><use href="#cg"/></svg>
  <div class="hrow" style="left:47px;top:426px;color:#c6c6c6">Inventory</div>
  <div class="a" style="left:0;top:19px;width:443px;height:16px;background:linear-gradient(#3e3e3e,#2e2e2e);border-bottom:1px solid #1e1e1e"></div>
  <div class="t" style="left:10px;top:24px;font-size:10px;color:#c8c8c8;letter-spacing:0.6px">Create</div>
  <div class="tri" style="left:49px;top:28px;border-left:2.5px solid transparent;border-right:2.5px solid transparent;border-top:3px solid #999"></div>
  <div class="a" style="left:132px;top:21px;width:305px;height:13px;background:#474747;border-radius:2px"></div>
  <div class="t" style="left:134px;top:23px;font-size:10px;color:#777">&#9906;&#9662;All</div>
  <div class="a" style="left:429px;top:35px;width:14px;height:406px;background:#2e2e2e"></div>
  <div class="a" style="left:431px;top:73px;width:9px;height:336px;background:#4a4a4a;border-radius:4px"></div>
</div>

<!-- INSPECTOR -->
<div class="a" style="left:1587px;top:73px;width:333px;height:957px;background:#383838;overflow:hidden">
  <div class="a" style="left:0;top:0;width:333px;height:19px;background:#232323"></div>
  <div class="tab" style="left:4px;top:2px;width:85px;height:18px;background:linear-gradient(#474747,#3c3c3c)"></div>
  <svg class="a" style="left:9px;top:5px" width="11" height="11"><circle cx="5.5" cy="5.5" r="5.2" fill="#eee"/><rect x="4.6" y="4.5" width="1.9" height="4.5" fill="#111"/><circle cx="5.5" cy="2.8" r="1" fill="#111"/></svg>
  <div class="t" style="left:23px;top:6px;font-size:11.5px;color:#b4b4b4;letter-spacing:0.4px">Inspector</div>
  <svg class="a" style="left:98px;top:5px" width="11" height="11"><circle cx="5.5" cy="5.5" r="5.2" fill="#eee"/><rect x="4.6" y="4.5" width="1.9" height="4.5" fill="#111"/><circle cx="5.5" cy="2.8" r="1" fill="#111"/></svg>
  <div class="t" style="left:111px;top:6px;font-size:11.5px;color:#b4b4b4;letter-spacing:0.4px">Inspector</div>
  <div class="t" style="left:183px;top:6px;font-size:11.5px;color:#b4b4b4;letter-spacing:0.4px">Services</div>
  <svg class="a" style="left:301px;top:7px" width="30" height="10"><rect x="2" y="4" width="7" height="5" fill="#777"/><path d="M3.5 4 V2.5 A2 2 0 0 1 7.5 2.5" fill="none" stroke="#777" stroke-width="1"/><path d="M12 4 L16 4 L14 7Z" fill="#ccc"/><path d="M17 3 H25 M17 6 H25 M17 9 H25" stroke="#ccc" stroke-width="1.2"/></svg>
  <div class="a" style="left:1px;top:19px;width:332px;height:43px;background:#3d3d3d;border-bottom:1px solid #2a2a2a"></div>
  <div class="t" style="left:45px;top:27px;font-size:13px;color:#c4c4c4;letter-spacing:0.6px">2 Objects</div>
  <div class="t" style="left:5px;top:71px;font-size:11px;color:#c4c4c4;letter-spacing:0.9px">Narrow the Selection:</div>
  <svg class="a" style="left:11px;top:91px" width="14" height="15"><rect x="3" y="1" width="10" height="9" fill="#9cb4c0" stroke="#5a6a70" stroke-width="0.5"/><path d="M0 3.5 L3 1.5 V5.5Z" fill="#eee"/><path d="M6 11 H10 L8 14Z" fill="#eee"/></svg>
  <div class="t" style="left:28px;top:94px;font-size:11px;color:#c4c4c4;letter-spacing:0.95px">1 Animator State</div>
  <svg class="a" style="left:13px;top:111px" width="12" height="14"><rect x="1" y="0" width="10" height="2" fill="#888"/><rect x="1" y="12" width="10" height="2" fill="#888"/><path d="M6 2 V10 M3.5 6 L6 9 L8.5 6" stroke="#eee" stroke-width="1.6" fill="none"/></svg>
  <div class="t" style="left:28px;top:114px;font-size:11px;color:#c4c4c4;letter-spacing:0.95px">1 Animator State Transition</div>
  <!-- asset labels -->
  <div class="a" style="left:1px;top:911px;width:332px;height:17px;background:linear-gradient(#3c3c3c,#303030);border-top:1px solid #4a4a4a"></div>
  <div class="a" style="left:1px;top:928px;width:332px;height:29px;background:#282828;box-shadow:inset 0 3px 3px rgba(0,0,0,0.35)"></div>
  <div class="t" style="left:5px;top:916px;font-size:11px;font-weight:bold;color:#d0d0d0;letter-spacing:0.9px">Asset Labels</div>
  <div class="a" style="left:6px;top:934px;width:59px;height:15px;background:#2a5aa8;border-radius:8px"></div>
  <div class="t" style="left:13px;top:937px;font-size:11px;color:#f0f0f0;letter-spacing:0.7px">Animator</div>
  <svg class="a" style="left:309px;top:934px" width="19" height="15"><rect x="0" y="0" width="19" height="15" rx="7.5" fill="#2a5aa8"/><path d="M5 3 L9 3 L14 8 L10 12 L5 7Z" fill="#f4f4f4"/><circle cx="7" cy="5" r="1" fill="#2a5aa8"/></svg>
</div>
<div class="a" style="left:1582px;top:73px;width:5px;height:957px;background:#1f1f1f"></div>

<svg width="0" height="0" style="position:absolute"><defs>
  <g id="ff"><path d="M0.5 2 L5 2 L6 3.5 L13 3.5 L13 12 L0.5 12Z" fill="#b8bcc0"/><rect x="0.5" y="5" width="12.5" height="7" fill="#8a9096"/><path d="M2 7 H12 M2 9 H12" stroke="#6a7076" stroke-width="0.6"/></g>
  <g id="fb"><path d="M0.5 2 L5 2 L6 3.5 L13 3.5 L13 12 L0.5 12Z" fill="#b8bcc0"/><rect x="0.5" y="5" width="12.5" height="7" fill="#8a9096"/><rect x="6" y="0" width="7" height="7" fill="#1e9fe0"/></g>
</defs></svg>
<!-- PROJECT -->
<div class="a" style="left:1139px;top:513px;width:443px;height:517px;background:#383838;overflow:hidden">
  <div class="a" style="left:0;top:0;width:443px;height:22px;background:#232323"></div>
  <div class="tab" style="left:1px;top:6px;width:71px;height:17px;background:linear-gradient(#474747,#3c3c3c)"></div>
  <svg class="a" style="left:11px;top:10px" width="12" height="10"><path d="M0.5 1 L4.5 1 L5.5 2.5 L11 2.5 L11 9 L0.5 9Z" fill="#777"/></svg>
  <div class="t" style="left:27px;top:10px;font-size:11.5px;color:#a8a8a8;letter-spacing:0.5px">Project</div>
  <svg class="a" style="left:87px;top:9px" width="9" height="11"><rect x="0.5" y="0.5" width="8" height="10" fill="#eee"/><path d="M2 3 H7 M2 5 H7 M2 7 H7" stroke="#333" stroke-width="0.8"/></svg>
  <div class="t" style="left:99px;top:10px;font-size:11.5px;color:#b4b4b4;letter-spacing:0.5px">Console</div>
  <svg class="a" style="left:161px;top:9px" width="12" height="12"><rect x="0.5" y="0.5" width="11" height="11" fill="none" stroke="#ccc" stroke-width="1"/><path d="M2 10 L10 2 M6 2 H10 V6 M2 2 L10 10" stroke="#ddd" stroke-width="1.3" fill="none"/></svg>
  <div class="t" style="left:177px;top:10px;font-size:11.5px;color:#b4b4b4;letter-spacing:0.5px">Navigation</div>
  <svg class="a" style="left:414px;top:11px" width="26" height="10"><rect x="2" y="4" width="7" height="5" fill="#777"/><path d="M3.5 4 V2.5 A2 2 0 0 1 7.5 2.5" fill="none" stroke="#777" stroke-width="1"/><path d="M12 4 L16 4 L14 7Z" fill="#ccc"/><path d="M17 3 H25 M17 6 H25 M17 9 H25" stroke="#ccc" stroke-width="1.2"/></svg>
  <!-- tree -->
  <div class="a" style="left:0;top:0;width:189px;height:517px;overflow:hidden">
  <div class="a" style="left:0px;top:501px;width:189px;height:16px;background:#464646"></div>
  <svg class="a" style="left:86px;top:39px" width="14" height="13"><use href="#ff"/></svg>
  <div class="hrow prow" style="left:103px;top:36px;color:#c2c2c2">Horse</div>
  <div class="tri" style="left:73px;top:58px;border-left:4.5px solid transparent;border-right:4.5px solid transparent;border-top:8px solid #5e5e5e"></div>
  <svg class="a" style="left:86px;top:55px" width="14" height="13"><use href="#fb"/></svg>
  <div class="hrow prow" style="left:103px;top:52px;color:#c2c2c2">Rider</div>
  <svg class="a" style="left:100px;top:71px" width="14" height="13"><use href="#ff"/></svg>
  <div class="hrow prow" style="left:117px;top:68px;color:#c2c2c2">Mount Dismount</div>
  <svg class="a" style="left:100px;top:87px" width="14" height="13"><use href="#fb"/></svg>
  <div class="hrow prow" style="left:117px;top:84px;color:#c2c2c2">Weapons Whip</div>
  <svg class="a" style="left:86px;top:103px" width="14" height="13"><use href="#ff"/></svg>
  <div class="hrow prow" style="left:103px;top:100px;color:#c2c2c2">Wings</div>
  <div class="tri" style="left:45px;top:122px;border-left:4.5px solid transparent;border-right:4.5px solid transparent;border-top:8px solid #5e5e5e"></div>
  <svg class="a" style="left:58px;top:119px" width="14" height="13"><use href="#ff"/></svg>
  <div class="hrow prow" style="left:75px;top:116px;color:#c2c2c2">3 - Assets</div>
  <div class="tri" style="left:61px;top:137px;border-top:4.5px solid transparent;border-bottom:4.5px solid transparent;border-left:8px solid #5e5e5e"></div>
  <svg class="a" style="left:72px;top:135px" width="14" height="13"><use href="#ff"/></svg>
  <div class="hrow prow" style="left:89px;top:132px;color:#c2c2c2">Combat</div>
  <div class="tri" style="left:59px;top:154px;border-left:4.5px solid transparent;border-right:4.5px solid transparent;border-top:8px solid #5e5e5e"></div>
  <svg class="a" style="left:72px;top:151px" width="14" height="13"><use href="#ff"/></svg>
  <div class="hrow prow" style="left:89px;top:148px;color:#c2c2c2">Events</div>
  <svg class="a" style="left:86px;top:167px" width="14" height="13"><use href="#ff"/></svg>
  <div class="hrow prow" style="left:103px;top:164px;color:#c2c2c2">Rider</div>
  <svg class="a" style="left:86px;top:183px" width="14" height="13"><use href="#ff"/></svg>
  <div class="hrow prow" style="left:103px;top:180px;color:#c2c2c2">Rider Combat</div>
  <div class="tri" style="left:59px;top:202px;border-left:4.5px solid transparent;border-right:4.5px solid transparent;border-top:8px solid #5e5e5e"></div>
  <svg class="a" style="left:72px;top:199px" width="14" height="13"><use href="#ff"/></svg>
  <div class="hrow prow" style="left:89px;top:196px;color:#c2c2c2">States</div>
  <svg class="a" style="left:86px;top:215px" width="14" height="13"><use href="#ff"/></svg>
  <div class="hrow prow" style="left:103px;top:212px;color:#c2c2c2">Horse</div>
  <svg class="a" style="left:86px;top:231px" width="14" height="13"><use href="#ff"/></svg>
  <div class="hrow prow" style="left:103px;top:228px;color:#c2c2c2">Rider</div>
  <div class="tri" style="left:59px;top:250px;border-left:4.5px solid transparent;border-right:4.5px solid transparent;border-top:8px solid #5e5e5e"></div>
  <svg class="a" style="left:72px;top:247px" width="14" height="13"><use href="#ff"/></svg>
  <div class="hrow prow" style="left:89px;top:244px;color:#c2c2c2">Variables</div>
  <svg class="a" style="left:86px;top:263px" width="14" height="13"><use href="#ff"/></svg>
  <div class="hrow prow" style="left:103px;top:260px;color:#c2c2c2">Ammo</div>
  <div class="tri" style="left:45px;top:282px;border-left:4.5px solid transparent;border-right:4.5px solid transparent;border-top:8px solid #5e5e5e"></div>
  <svg class="a" style="left:58px;top:279px" width="14" height="13"><use href="#fb"/></svg>
  <div class="hrow prow" style="left:75px;top:276px;color:#c2c2c2">4 - Prefabs</div>
  <svg class="a" style="left:72px;top:295px" width="14" height="13"><use href="#ff"/></svg>
  <div class="hrow prow" style="left:89px;top:292px;color:#c2c2c2">Effects</div>
  <svg class="a" style="left:72px;top:311px" width="14" height="13"><use href="#ff"/></svg>
  <div class="hrow prow" style="left:89px;top:308px;color:#c2c2c2">Horses</div>
  <svg class="a" style="left:72px;top:327px" width="14" height="13"><use href="#ff"/></svg>
  <div class="hrow prow" style="left:89px;top:324px;color:#c2c2c2">Rider</div>
  <svg class="a" style="left:72px;top:343px" width="14" height="13"><use href="#ff"/></svg>
  <div class="hrow prow" style="left:89px;top:340px;color:#c2c2c2">UI</div>
  <svg class="a" style="left:72px;top:359px" width="14" height="13"><use href="#ff"/></svg>
  <div class="hrow prow" style="left:89px;top:356px;color:#c2c2c2">Wagon</div>
  <div class="tri" style="left:59px;top:378px;border-left:4.5px solid transparent;border-right:4.5px solid transparent;border-top:8px solid #5e5e5e"></div>
  <svg class="a" style="left:72px;top:375px" width="14" height="13"><use href="#fb"/></svg>
  <div class="hrow prow" style="left:89px;top:372px;color:#c2c2c2">Weapons</div>
  <svg class="a" style="left:86px;top:391px" width="14" height="13"><use href="#fb"/></svg>
  <div class="hrow prow" style="left:103px;top:388px;color:#c2c2c2">Projectiles</div>
  <svg class="a" style="left:86px;top:407px" width="14" height="13"><use href="#ff"/></svg>
  <div class="hrow prow" style="left:103px;top:404px;color:#c2c2c2">Weapon IK</div>
  <div class="tri" style="left:47px;top:425px;border-top:4.5px solid transparent;border-bottom:4.5px solid transparent;border-left:8px solid #5e5e5e"></div>
  <svg class="a" style="left:58px;top:423px" width="14" height="13"><use href="#ff"/></svg>
  <div class="hrow prow" style="left:75px;top:420px;color:#c2c2c2">5 - Materials &amp; Textures</div>
  <div class="tri" style="left:47px;top:441px;border-top:4.5px solid transparent;border-bottom:4.5px solid transparent;border-left:8px solid #5e5e5e"></div>
  <svg class="a" style="left:58px;top:439px" width="14" height="13"><use href="#ff"/></svg>
  <div class="hrow prow" style="left:75px;top:436px;color:#c2c2c2">6 - Audio</div>
  <div class="tri" style="left:47px;top:457px;border-top:4.5px solid transparent;border-bottom:4.5px solid transparent;border-left:8px solid #5e5e5e"></div>
  <svg class="a" style="left:58px;top:455px" width="14" height="13"><use href="#ff"/></svg>
  <div class="hrow prow" style="left:75px;top:452px;color:#c2c2c2">7 - Models</div>
  <div class="tri" style="left:47px;top:473px;border-top:4.5px solid transparent;border-bottom:4.5px solid transparent;border-left:8px solid #5e5e5e"></div>
  <svg class="a" style="left:58px;top:471px" width="14" height="13"><use href="#ff"/></svg>
  <div class="hrow prow" style="left:75px;top:468px;color:#c2c2c2">8 - Undead Horse</div>
  <div class="tri" style="left:45px;top:490px;border-left:4.5px solid transparent;border-right:4.5px solid transparent;border-top:8px solid #5e5e5e"></div>
  <svg class="a" style="left:58px;top:487px" width="14" height="13"><use href="#fb"/></svg>
  <div class="hrow prow" style="left:75px;top:484px;color:#c2c2c2">Resources</div>
  <svg class="a" style="left:72px;top:503px" width="14" height="13"><use href="#fb"/></svg>
  <div class="hrow prow" style="left:89px;top:500px;color:#e0e0e0">Layers</div>
  </div>
  <div class="a" style="left:189px;top:40px;width:11px;height:477px;background:#2f2f2f"></div>
  <div class="a" style="left:191px;top:43px;width:7px;height:20px;background:#414141;border-radius:3px"></div>
  <div class="a" style="left:191px;top:394px;width:7px;height:90px;background:#474747;border-radius:3px"></div>
  <div class="a" style="left:200px;top:40px;width:4px;height:477px;background:#252525"></div>
  <!-- toolbar -->
  <div class="a" style="left:0;top:22px;width:443px;height:18px;background:linear-gradient(#3e3e3e,#2e2e2e);border-bottom:1px solid #1e1e1e"></div>
  <div class="t" style="left:11px;top:27px;font-size:10px;color:#c8c8c8;letter-spacing:0.6px">Create</div>
  <div class="tri" style="left:50px;top:31px;border-left:2.5px solid transparent;border-right:2.5px solid transparent;border-top:3px solid #999"></div>
  <div class="a" style="left:69px;top:24px;width:297px;height:14px;background:linear-gradient(#2e2e2e,#404040);border-radius:3px;border-top:1px solid #222"></div>
  <svg class="a" style="left:73px;top:26px" width="14" height="10"><circle cx="5" cy="4.5" r="3.2" fill="none" stroke="#555" stroke-width="1.2"/><path d="M7.5 7 L10 9.5" stroke="#555" stroke-width="1.3"/></svg>
  <svg class="a" style="left:376px;top:25px" width="64" height="14"><circle cx="9" cy="4" r="2.5" fill="#999"/><path d="M3 11 L6 6 L9 11Z" fill="#999"/><rect x="9" y="7" width="5" height="5" fill="#999"/><path d="M26 2 L31 2 L37 8 L32 13 L26 7Z" fill="#888"/><path d="M50 1 L52 6 L57 6 L53 9 L55 13 L50 10 L45 13 L47 9 L43 6 L48 6Z" fill="#666"/></svg>
  <!-- right pane -->
  <div class="a" style="left:204px;top:40px;width:240px;height:17px;background:#3a3a3a;border-bottom:1px solid #2a2a2a"></div>
  <div class="t" style="left:209px;top:45px;font-size:11px;color:#b8b8b8;letter-spacing:0.6px">Assets</div>
  <svg class="a" style="left:255px;top:44px" width="7" height="10"><path d="M1.5 1 L5.5 5 L1.5 9" fill="none" stroke="#888" stroke-width="1.3"/></svg>
  <div class="t" style="left:266px;top:45px;font-size:11px;color:#b8b8b8;letter-spacing:0.78px">Malbers Animations</div>
  <svg class="a" style="left:384px;top:44px" width="7" height="10"><path d="M1.5 1 L5.5 5 L1.5 9" fill="none" stroke="#888" stroke-width="1.3"/></svg>
  <div class="t" style="left:397px;top:45px;font-size:11px;color:#b8b8b8;letter-spacing:0.6px">Horse AnimSet</div>
  <svg class="a" style="left:221px;top:59px" width="13" height="15"><rect x="0" y="1" width="13" height="13" fill="#3a5a78"/><rect x="1" y="2" width="5" height="5" fill="#d8e0e4"/><rect x="7" y="2" width="5" height="5" fill="#3aa0e0"/><rect x="7" y="8" width="5" height="5" fill="#d8e0e4"/><path d="M1.5 8.5 L5 10.5 L1.5 12.5Z" fill="#fff"/></svg>
  <div class="t" style="left:237px;top:62px;font-size:11.5px;color:#c4c4c4;letter-spacing:0.5px">Combat</div>
  <svg class="a" style="left:221px;top:75px" width="13" height="15"><rect x="0" y="1" width="13" height="13" fill="#5a6a78"/><rect x="1" y="2" width="5" height="5" fill="#d8e0e4"/><rect x="7" y="2" width="5" height="5" fill="#c8d0d4"/><rect x="7" y="8" width="5" height="5" fill="#d8e0e4"/><path d="M1.5 8.5 L5 10.5 L1.5 12.5Z" fill="#fff"/></svg>
  <div class="t" style="left:237px;top:78px;font-size:11.5px;color:#c4c4c4;letter-spacing:0.5px">Mount v2</div>
  <!-- bottom bar -->
  <div class="a" style="left:204px;top:499px;width:240px;height:18px;background:#393939;border-top:1px solid #262626"></div>
  <svg class="a" style="left:210px;top:502px" width="12" height="12"><rect x="0" y="0" width="12" height="12" fill="#6a7a88"/><rect x="1" y="1" width="4" height="4" fill="#ddd"/><rect x="7" y="7" width="4" height="4" fill="#ddd"/><path d="M6 1 L11 6" stroke="#ddd" stroke-width="1.2"/></svg>
  <div class="t" style="left:224px;top:504px;font-size:11px;color:#b4b4b4;letter-spacing:0.6px">Assets/Malbers Animation</div>
  <div class="a" style="left:373px;top:503px;width:8px;height:8px;border-radius:50%;background:#555"></div>
  <div class="a" style="left:380px;top:507px;width:50px;height:2px;background:#262626"></div>
</div>

<!-- ANIMATOR -->
<div class="a" style="left:0;top:453px;width:1136px;height:577px;background:#262626;overflow:hidden">
  <div class="tab" style="left:0;top:2px;width:82px;height:18px;background:linear-gradient(#474747,#3c3c3c);border-top:2px solid #4a6a9a"></div>
  <svg class="a" style="left:7px;top:6px" width="12" height="12"><rect x="1" y="0" width="3" height="3" fill="#888"/><rect x="7" y="0" width="3" height="3" fill="#888"/><rect x="7" y="6" width="3" height="3" fill="#888"/><path d="M1 5 L5 8 L1 11Z" fill="#fff"/></svg>
  <div class="t" style="left:23px;top:6px;font-size:11.5px;color:#b4b4b4;letter-spacing:0.4px">Animator</div>
  <svg class="a" style="left:92px;top:5px" width="10" height="11"><rect x="0.5" y="0.5" width="9" height="10" rx="2" fill="#eee"/><path d="M1 4 H9 M1 7 H9" stroke="#222" stroke-width="1.3"/></svg>
  <div class="t" style="left:107px;top:6px;font-size:11.5px;color:#b4b4b4;letter-spacing:0.5px">Console Pro</div>
  <svg class="a" style="left:195px;top:5px" width="11" height="11"><circle cx="5.5" cy="5.5" r="5" fill="#eee"/><path d="M5.5 2 V5.5 H8.5" stroke="#222" stroke-width="1.4" fill="none"/></svg>
  <div class="t" style="left:210px;top:6px;font-size:11.5px;color:#b4b4b4;letter-spacing:0.5px">Animation</div>
  <svg class="a" style="left:1103px;top:7px" width="30" height="10"><rect x="2" y="4" width="7" height="5" fill="#777"/><path d="M3.5 4 V2.5 A2 2 0 0 1 7.5 2.5" fill="none" stroke="#777" stroke-width="1"/><path d="M12 4 L16 4 L14 7Z" fill="#ccc"/><path d="M17 3 H25 M17 6 H25 M17 9 H25" stroke="#ccc" stroke-width="1.2"/></svg>
  <!-- layers panel -->
  <div class="a" style="left:0;top:21px;width:395px;height:556px;background:#393939"></div>
  <div class="a" style="left:0;top:21px;width:395px;height:18px;background:linear-gradient(#363636,#2c2c2c)"></div>
  <div class="a" style="left:8px;top:22px;width:47px;height:17px;background:linear-gradient(#4a4a4a,#3e3e3e)"></div>
  <div class="t" style="left:15px;top:27px;font-size:10px;color:#c8c8c8;letter-spacing:0.7px">Layers</div>
  <div class="t" style="left:63px;top:27px;font-size:10px;color:#c8c8c8;letter-spacing:0.7px">Parameters</div>
  <svg class="a" style="left:369px;top:25px" width="14" height="10"><ellipse cx="7" cy="5" rx="6.3" ry="4" fill="none" stroke="#ddd" stroke-width="1.2"/><ellipse cx="7" cy="5" rx="2.5" ry="2" fill="#222"/><path d="M1 3 Q7 -1 13 3" stroke="#ddd" fill="none"/></svg>
  <div class="a" style="left:0;top:39px;width:395px;height:20px;background:linear-gradient(#3c3c3c,#2e2e2e)"></div>
  <svg class="a" style="left:375px;top:45px" width="10" height="10"><path d="M5 0.5 V9.5 M0.5 5 H9.5" stroke="#ddd" stroke-width="2"/></svg>
  <!-- layer rows -->
  <div class="a" style="left:1px;top:59px;width:392px;height:120px;background:#4f4f4f"></div>
  <div class="a" style="left:1px;top:98px;width:392px;height:1px;background:#464646"></div>
  <div class="a" style="left:1px;top:138px;width:392px;height:1px;background:#464646"></div>
  <div class="a" style="left:1px;top:179px;width:392px;height:3px;background:#333"></div>
  <div class="a" style="left:5px;top:69px;width:10px;height:1.5px;background:#111"></div><div class="a" style="left:5px;top:72px;width:10px;height:1.5px;background:#111"></div>
  <div class="a" style="left:5px;top:109px;width:10px;height:1.5px;background:#111"></div><div class="a" style="left:5px;top:112px;width:10px;height:1.5px;background:#111"></div>
  <div class="a" style="left:5px;top:149px;width:10px;height:1.5px;background:#111"></div><div class="a" style="left:5px;top:152px;width:10px;height:1.5px;background:#111"></div>
  <div class="t" style="left:22px;top:66px;font-size:11px;color:#c0c0c0;letter-spacing:0.9px">Rider Right Arm</div>
  <div class="t" style="left:22px;top:106px;font-size:11px;color:#c0c0c0;letter-spacing:0.9px">Rider Left Arm</div>
  <div class="t" style="left:22px;top:146px;font-size:11px;color:#c0c0c0;letter-spacing:0.9px">Rider Combat</div>
  <div class="a" style="left:22px;top:84px;width:364px;height:2px;background:#8a8a8a;border-radius:1px"></div>
  <div class="a" style="left:22px;top:124px;width:364px;height:2px;background:#8a8a8a;border-radius:1px"></div>
  <div class="a" style="left:22px;top:164px;width:364px;height:2px;background:#8a8a8a;border-radius:1px"></div>
  <svg class="a" style="left:338px;top:64px" width="13" height="12"><path d="M6.5 0.5 L12.5 11.5 H0.5Z" fill="#f0d020"/><rect x="5.8" y="4" width="1.4" height="4" fill="#222"/><rect x="5.8" y="9" width="1.4" height="1.4" fill="#222"/></svg>
  <div class="t" style="left:358px;top:67px;font-size:10px;font-weight:bold;color:#c8c8c8">M</div>
  <div class="t" style="left:358px;top:107px;font-size:10px;font-weight:bold;color:#c8c8c8">M</div>
  <div class="t" style="left:342px;top:147px;font-size:10px;font-weight:bold;color:#c8c8c8">M</div>
  <div class="t" style="left:354px;top:147px;font-size:10px;font-weight:bold;color:#c8c8c8">IK</div>
  <svg class="a" style="left:373px;top:66px" width="10" height="10"><use href="#gear"/></svg>
  <svg class="a" style="left:373px;top:106px" width="10" height="10"><use href="#gear"/></svg>
  <svg class="a" style="left:373px;top:146px" width="10" height="10"><use href="#gear"/></svg>
  <div class="a" style="left:393px;top:21px;width:4px;height:556px;background:#2c2c2c"></div><div class="a" style="left:391px;top:59px;width:4px;height:122px;background:#595959"></div>
  <!-- graph -->
  </div>
<svg class="a" style="left:397px;top:474px" width="739" height="556" viewBox="0 0 739 556">
<defs><linearGradient id="g876558" x1="0" y1="0" x2="0" y2="1"><stop offset="0" stop-color="#5b5f66"/><stop offset="1" stop-color="#45484f"/></linearGradient><linearGradient id="g650607" x1="0" y1="0" x2="0" y2="1"><stop offset="0" stop-color="#62a898"/><stop offset="1" stop-color="#3f7f70"/></linearGradient><linearGradient id="g698667" x1="0" y1="0" x2="0" y2="1"><stop offset="0" stop-color="#55585e"/><stop offset="1" stop-color="#46484d"/></linearGradient><linearGradient id="g638751" x1="0" y1="0" x2="0" y2="1"><stop offset="0" stop-color="#55585e"/><stop offset="1" stop-color="#46484d"/></linearGradient><linearGradient id="g638799" x1="0" y1="0" x2="0" y2="1"><stop offset="0" stop-color="#55585e"/><stop offset="1" stop-color="#46484d"/></linearGradient><linearGradient id="g638847" x1="0" y1="0" x2="0" y2="1"><stop offset="0" stop-color="#55585e"/><stop offset="1" stop-color="#46484d"/></linearGradient><linearGradient id="g638895" x1="0" y1="0" x2="0" y2="1"><stop offset="0" stop-color="#55585e"/><stop offset="1" stop-color="#46484d"/></linearGradient><linearGradient id="g373775" x1="0" y1="0" x2="0" y2="1"><stop offset="0" stop-color="#2e9a3a"/><stop offset="1" stop-color="#1c7428"/></linearGradient><linearGradient id="g348835" x1="0" y1="0" x2="0" y2="1"><stop offset="0" stop-color="#e28c2c"/><stop offset="1" stop-color="#b0621a"/></linearGradient><linearGradient id="g902835" x1="0" y1="0" x2="0" y2="1"><stop offset="0" stop-color="#cc2424"/><stop offset="1" stop-color="#961010"/></linearGradient><linearGradient id="bc" x1="0" y1="0" x2="0" y2="1"><stop offset="0" stop-color="#3c3c3c"/><stop offset="1" stop-color="#2c2c2c"/></linearGradient></defs>
<rect width="739" height="556" fill="#292929"/>
<rect x="120" y="18" width="1" height="518" fill="#161616"/>
<rect x="240" y="18" width="1" height="518" fill="#161616"/>
<rect x="360" y="18" width="1" height="518" fill="#161616"/>
<rect x="479" y="18" width="1" height="518" fill="#161616"/>
<rect x="599" y="18" width="1" height="518" fill="#161616"/>
<rect x="719" y="18" width="1" height="518" fill="#161616"/>
<rect x="0" y="36" width="739" height="1" fill="#161616"/>
<rect x="0" y="156" width="739" height="1" fill="#161616"/>
<rect x="0" y="276" width="739" height="1" fill="#161616"/>
<rect x="0" y="396" width="739" height="1" fill="#161616"/>
<rect x="0" y="516" width="739" height="1" fill="#161616"/>
<path d="M132 361 L290 316" stroke="#d8d8d8" stroke-width="2.2"/>
<path d="M153 372 L241 361" stroke="#d8d8d8" stroke-width="2.2"/>
<path d="M153 389 L241 392" stroke="#d8d8d8" stroke-width="2.2"/>
<path d="M122 400 L241 424" stroke="#d8d8d8" stroke-width="2.2"/>
<path d="M383 316 L524 361" stroke="#d8d8d8" stroke-width="2.2"/>
<path d="M441 361 L505 371" stroke="#d8d8d8" stroke-width="2.2"/>
<path d="M441 390 L505 385" stroke="#d8d8d8" stroke-width="2.2"/>
<path d="M427 421 L546 390" stroke="#d8d8d8" stroke-width="2.2"/>
<path d="M204.3 340.4 L192.7 349.0 L189.9 339.3Z" fill="#e6e6e6"/>
<path d="M204.6 365.6 L191.8 372.2 L190.5 362.2Z" fill="#e6e6e6"/>
<path d="M204.6 390.8 L191.0 395.3 L191.2 385.2Z" fill="#e6e6e6"/>
<path d="M204.4 416.7 L190.2 419.0 L192.2 409.0Z" fill="#e6e6e6"/>
<path d="M466.3 342.6 L451.8 343.3 L454.8 333.6Z" fill="#e6e6e6"/>
<path d="M466.6 365.0 L452.4 367.9 L454.0 357.9Z" fill="#e6e6e6"/>
<path d="M466.6 388.0 L453.5 394.1 L452.7 384.1Z" fill="#e6e6e6"/>
<path d="M466.3 410.8 L454.6 419.1 L451.9 409.2Z" fill="#e6e6e6"/>
<path d="M48 330 L48 361" stroke="#c07a10" stroke-width="2.2"/>
<path d="M48.0 354.6 L42.9 341.1 L53.1 341.1Z" fill="#c07a10"/>
<path d="M576 125 L576 361" stroke="#3d7ede" stroke-width="2"/>
<path d="M576.0 248.9 L570.2 233.4 L581.8 233.4Z" fill="#3d7ede"/>
<rect x="480" y="86" width="203" height="41" rx="3" fill="#141414" opacity="0.6"/>
<rect x="479" y="84" width="203" height="41" rx="3" fill="url(#g876558)"/>
<rect x="479.5" y="84.5" width="202" height="40" rx="3" fill="none" stroke="#3a7ad8" stroke-width="2"/><rect x="478.5" y="83.5" width="205" height="43" rx="4" fill="none" stroke="#5a9ae8" stroke-width="1" opacity="0.5"/>
<text x="580.5" y="103" text-anchor="middle" font-size="11" fill="#e4e4e4" letter-spacing="0.95" font-family="Liberation Sans">New State</text>
<rect x="254" y="135" width="150" height="29" rx="3" fill="#141414" opacity="0.6"/>
<rect x="253" y="133" width="150" height="29" rx="3" fill="url(#g650607)"/>
<text x="328.0" y="151" text-anchor="middle" font-size="11" fill="#e4e4e4" letter-spacing="0.95" font-family="Liberation Sans">Any State</text>
<rect x="302" y="195" width="200" height="39" rx="3" fill="#141414" opacity="0.6"/>
<rect x="301" y="193" width="200" height="39" rx="3" fill="url(#g698667)"/>
<text x="401.0" y="211" text-anchor="middle" font-size="11" fill="#e4e4e4" letter-spacing="0.95" font-family="Liberation Sans">New State 0</text>
<rect x="242" y="279" width="200" height="39" rx="3" fill="#141414" opacity="0.6"/>
<rect x="241" y="277" width="200" height="39" rx="3" fill="url(#g638751)"/>
<text x="341.0" y="295" text-anchor="middle" font-size="11" fill="#e4e4e4" letter-spacing="0.95" font-family="Liberation Sans">Melee Idle RH</text>
<rect x="242" y="327" width="200" height="39" rx="3" fill="#141414" opacity="0.6"/>
<rect x="241" y="325" width="200" height="39" rx="3" fill="url(#g638799)"/>
<text x="341.0" y="343" text-anchor="middle" font-size="11" fill="#e4e4e4" letter-spacing="0.95" font-family="Liberation Sans">Bow Idle RH</text>
<rect x="242" y="375" width="200" height="39" rx="3" fill="#141414" opacity="0.6"/>
<rect x="241" y="373" width="200" height="39" rx="3" fill="url(#g638847)"/>
<text x="341.0" y="391" text-anchor="middle" font-size="11" fill="#e4e4e4" letter-spacing="0.95" font-family="Liberation Sans">Pistol Idle RH</text>
<rect x="242" y="423" width="200" height="38" rx="3" fill="#141414" opacity="0.6"/>
<rect x="241" y="421" width="200" height="38" rx="3" fill="url(#g638895)"/>
<text x="341.0" y="439" text-anchor="middle" font-size="11" fill="#e4e4e4" letter-spacing="0.95" font-family="Liberation Sans">Throwable Idle RH 1</text>
<rect x="-23" y="303" width="151" height="29" rx="3" fill="#141414" opacity="0.6"/>
<rect x="-24" y="301" width="151" height="29" rx="3" fill="url(#g373775)"/>
<text x="51.5" y="319" text-anchor="middle" font-size="11" fill="#e4e4e4" letter-spacing="0.95" font-family="Liberation Sans">Entry</text>
<rect x="-48" y="363" width="202" height="38" rx="3" fill="#141414" opacity="0.6"/>
<rect x="-49" y="361" width="202" height="38" rx="3" fill="url(#g348835)"/>
<text x="52.0" y="379" text-anchor="middle" font-size="11" fill="#e4e4e4" letter-spacing="0.95" font-family="Liberation Sans">Null</text>
<rect x="506" y="363" width="150" height="29" rx="3" fill="#141414" opacity="0.6"/>
<rect x="505" y="361" width="150" height="29" rx="3" fill="url(#g902835)"/>
<text x="580.0" y="379" text-anchor="middle" font-size="11" fill="#e4e4e4" letter-spacing="0.95" font-family="Liberation Sans">Exit</text>
<rect x="0" y="0" width="739" height="18" fill="url(#bc)"/>
<rect x="0" y="17" width="739" height="1" fill="#1a1a1a"/>
<path d="M0 1 H110 L116 9 L110 17 H0Z" fill="#474747"/>
<text x="10" y="13" font-size="10.5" fill="#c4c4c4" letter-spacing="0.6" font-family="Liberation Sans">Rider Right Arm</text>
<rect x="649" y="1" width="82" height="16" fill="#4a4a4a"/>
<text x="654" y="13" font-size="10" fill="#c8c8c8" letter-spacing="0.5" font-family="Liberation Sans">Auto Live Link</text>
<rect x="0" y="535" width="739" height="21" fill="#3d3d3d"/>
<rect x="0" y="535" width="739" height="1.5" fill="#1a1a1a"/>
<text x="731" y="551" text-anchor="end" font-size="10" fill="#bdbdbd" letter-spacing="0.72" font-family="Liberation Sans">Malbers Animations/Horse AnimSet Pro/Resources/Layers/Combat.controller</text>
<path d="M580 178 L580 194 L584 190 L587 197 L589 196 L586 189 L591 189Z" fill="#fff" stroke="#111" stroke-width="0.8"/>
</svg>
<svg width="0" height="0" style="position:absolute"><defs><g id="gear"><circle cx="5" cy="5" r="2.8" fill="none" stroke="#eee" stroke-width="1.6"/><path d="M5 0 V10 M0 5 H10 M1.5 1.5 L8.5 8.5 M8.5 1.5 L1.5 8.5" stroke="#eee" stroke-width="1.3"/><circle cx="5" cy="5" r="1.2" fill="#4f4f4f"/></g></defs></svg>

<!-- STATUS BAR -->
<div class="a" style="left:0;top:1028px;width:1920px;height:22px;background:#222"></div>
<svg class="a" style="left:3px;top:1033px" width="13" height="12"><path d="M6.5 0.5 A6 5.3 0 1 1 4 10.6 L2.5 11.8 L3 9.6 A6 5.3 0 0 1 6.5 0.5Z" fill="#eee"/><rect x="5.8" y="2.5" width="1.6" height="4.5" fill="#222"/><rect x="5.8" y="8" width="1.6" height="1.5" fill="#222"/></svg>
<div class="t" style="left:20px;top:1036px;font-size:11px;color:#a8a8a8;letter-spacing:0.6px">Bow:</div>
<div class="t" style="left:53px;top:1035px;font-size:11.5px;font-weight:bold;color:#e6e6e6;letter-spacing:1.35px">[Weapon Prepared]</div>
<!-- TASKBAR -->
<div class="a" style="left:0;top:1050px;width:1920px;height:30px;background:#1c1c24"></div>
<svg class="a" style="left:10px;top:1057px" width="17" height="17"><path d="M0 2.5 L7 1.5 V8 H0Z M8 1.3 L17 0 V8 H8Z M0 9 H7 V15.5 L0 14.5Z M8 9 H17 V17 L8 15.7Z" fill="#fff"/></svg>
<svg class="a" style="left:48px;top:1057px" width="18" height="16"><rect x="1" y="1" width="16" height="14" rx="3" fill="#7289da"/><ellipse cx="6" cy="8" rx="1.6" ry="1.8" fill="#fff"/><ellipse cx="12" cy="8" rx="1.6" ry="1.8" fill="#fff"/></svg>
<div class="a" style="left:88px;top:1056px;width:12px;height:18px;background:#1e88e5;border-top:2px solid #80c0ff"></div>
<div class="a" style="left:121px;top:1056px;width:18px;height:18px;background:#dfe8e8"></div><div class="t" style="left:126px;top:1059px;font-size:13px;font-weight:bold;color:#1a9a90">3</div>
<svg class="a" style="left:159px;top:1056px" width="18" height="18"><rect x="1" y="1" width="16" height="16" fill="#1d7ae0"/><rect x="4" y="1" width="9" height="6" fill="#cfe4ff"/><rect x="3" y="10" width="12" height="7" fill="#fff"/><rect x="3" y="15" width="12" height="2" fill="#e03030"/></svg>
<svg class="a" style="left:196px;top:1057px" width="18" height="16"><path d="M0 2 H7 L9 4 H18 V16 H0Z" fill="#f3c043"/><rect x="0" y="6" width="18" height="10" fill="#ffd865"/><rect x="5" y="10" width="9" height="4" fill="#3a8ee0"/></svg>
<svg class="a" style="left:233px;top:1056px" width="18" height="18"><circle cx="9" cy="9" r="8.5" fill="#e94235"/><path d="M9 9 L1.5 13 A8.5 8.5 0 0 0 13 16.5Z" fill="#34a853"/><path d="M9 9 L13 16.5 A8.5 8.5 0 0 0 17.2 6Z" fill="#fbbc05"/><circle cx="9" cy="9" r="3.8" fill="#fff"/><circle cx="9" cy="9" r="2.8" fill="#4285f4"/></svg>
<svg class="a" style="left:270px;top:1056px" width="18" height="18"><circle cx="9" cy="9" r="8.5" fill="#1b2838"/><circle cx="11.5" cy="6.5" r="3" fill="none" stroke="#fff" stroke-width="1.4"/><path d="M1 11 L8 14" stroke="#fff" stroke-width="2"/></svg>
<div class="a" style="left:307px;top:1056px;width:18px;height:18px;background:#001e36;border:1px solid #31a8ff"></div><div class="t" style="left:310px;top:1060px;font-size:10px;color:#31a8ff">Ps</div>
<div class="a" style="left:344px;top:1056px;width:18px;height:18px;background:#1f0040;border:1px solid #9999ff"></div><div class="t" style="left:347px;top:1060px;font-size:10px;color:#9999ff">Ae</div>
<svg class="a" style="left:381px;top:1056px" width="18" height="18"><circle cx="10" cy="10" r="6" fill="#f5792a"/><circle cx="10" cy="10" r="3" fill="#fff"/><circle cx="10" cy="10" r="1.6" fill="#265787"/><path d="M1 8 L6 6" stroke="#f5792a" stroke-width="2"/></svg>
<div class="a" style="left:420px;top:1056px;width:14px;height:18px;background:#111;border:1px solid #444"></div><div class="t" style="left:421px;top:1059px;font-size:7px;font-weight:bold;color:#fff">EPIC</div>
<svg class="a" style="left:455px;top:1056px" width="18" height="18"><ellipse cx="8" cy="10" rx="7" ry="6" fill="#8ab4e0"/><circle cx="5" cy="9" r="1.5" fill="#e04040"/><circle cx="9" cy="7" r="1.5" fill="#40c040"/><path d="M13 2 L16 16" stroke="#e0a020" stroke-width="2.5"/></svg>
<svg class="a" style="left:492px;top:1056px" width="18" height="18"><path d="M9 1 L16 5 L16 13 L9 17 L2 13 L2 5Z" fill="#e03040"/><text x="5" y="13" font-size="10" font-weight="bold" fill="#fff" font-family="Liberation Sans">S</text></svg>
<svg class="a" style="left:531px;top:1056px" width="14" height="18"><rect x="0" y="0" width="14" height="18" fill="#5a6878"/><rect x="2" y="2" width="10" height="4" fill="#a8c0d0"/><g fill="#dde"><rect x="2" y="8" width="2.5" height="2"/><rect x="6" y="8" width="2.5" height="2"/><rect x="10" y="8" width="2.5" height="2"/><rect x="2" y="12" width="2.5" height="2"/><rect x="6" y="12" width="2.5" height="2"/><rect x="10" y="12" width="2.5" height="2"/></g></svg>
<svg class="a" style="left:566px;top:1056px" width="16" height="18"><rect x="1" y="0" width="14" height="18" fill="#f0d8a0"/><circle cx="8" cy="8" r="4" fill="none" stroke="#c06020" stroke-width="2"/><path d="M5 11 L2 16" stroke="#c06020" stroke-width="2"/></svg>
<div class="a" style="left:603px;top:1056px;width:18px;height:18px;background:#dfe8e8"></div><div class="t" style="left:608px;top:1059px;font-size:13px;font-weight:bold;color:#1a9a90">3</div>
<svg class="a" style="left:640px;top:1056px" width="18" height="18"><circle cx="9" cy="9" r="8.5" fill="#e94235"/><path d="M9 9 L1.5 13 A8.5 8.5 0 0 0 13 16.5Z" fill="#34a853"/><path d="M9 9 L13 16.5 A8.5 8.5 0 0 0 17.2 6Z" fill="#fbbc05"/><circle cx="9" cy="9" r="3.8" fill="#fff"/><circle cx="9" cy="9" r="2.8" fill="#4285f4"/></svg>
<svg class="a" style="left:677px;top:1056px" width="18" height="18"><circle cx="9" cy="9" r="8" fill="#302e31" stroke="#bbb" stroke-width="1.4"/><circle cx="9" cy="5" r="2.4" fill="none" stroke="#bbb" stroke-width="1.2"/><circle cx="5.5" cy="11" r="2.4" fill="none" stroke="#bbb" stroke-width="1.2"/><circle cx="12.5" cy="11" r="2.4" fill="none" stroke="#bbb" stroke-width="1.2"/></svg>
<svg class="a" style="left:714px;top:1056px" width="18" height="18"><path d="M9 1 L11 7 L17 9 L11 11 L9 17 L7 11 L1 9 L7 7Z" fill="#bbb"/><circle cx="9" cy="9" r="2" fill="#333"/></svg>
<svg class="a" style="left:751px;top:1056px" width="18" height="18"><path d="M2 1 L16 17 M16 1 L2 17" stroke="#fff" stroke-width="2.4"/><path d="M12 1 L16 1 L13 5" stroke="#e05020" stroke-width="2"/></svg>
<svg class="a" style="left:788px;top:1056px" width="18" height="18"><rect x="1" y="1" width="16" height="16" fill="#1f5fb0"/><path d="M9 3 V12 M5 8 L9 12 L13 8" stroke="#fff" stroke-width="2.2" fill="none"/><rect x="4" y="14" width="10" height="2" fill="#fff"/></svg>
<svg class="a" style="left:825px;top:1056px" width="18" height="18"><circle cx="9" cy="9" r="8.5" fill="#6c5fc7"/><path d="M4 12 A6 6 0 0 1 14 6 M6 13 A4 4 0 0 1 13 9" stroke="#fff" stroke-width="1.4" fill="none"/></svg>
<div class="a" style="left:862px;top:1056px;width:18px;height:18px;background:#eee"></div><svg class="a" style="left:865px;top:1059px" width="12" height="12"><path d="M6 1 L11 3.5 L11 8.5 L6 11 L1 8.5 L1 3.5Z" fill="none" stroke="#222" stroke-width="1.6"/></svg>
<svg class="a" style="left:899px;top:1056px" width="18" height="18"><rect x="1" y="1" width="16" height="16" fill="#f7d21a"/><path d="M10 17 L17 10 V17Z" fill="#8a6a10"/></svg>
<svg class="a" style="left:939px;top:1056px" width="12" height="18"><rect x="1" y="2" width="10" height="15" rx="5" fill="none" stroke="#8a8aa0" stroke-width="1.6"/><path d="M6 0 V8" stroke="#8a8aa0" stroke-width="1.6"/></svg>
<svg class="a" style="left:973px;top:1056px" width="18" height="18"><rect x="0" y="0" width="18" height="18" fill="#1a2a30"/><path d="M9 2 L15 16 M9 2 L3 16 M6 11 H12" stroke="#d0a040" stroke-width="1.6" fill="none"/></svg>
<svg class="a" style="left:1010px;top:1056px" width="18" height="18"><rect x="1" y="1" width="16" height="16" fill="#1d7ae0"/><rect x="4" y="1" width="9" height="6" fill="#cfe4ff"/><rect x="3" y="10" width="12" height="7" fill="#fff"/><rect x="3" y="15" width="12" height="2" fill="#e03030"/></svg>
<div class="a" style="left:1038px;top:1050px;width:37px;height:30px;background:#3c3c44"></div><svg class="a" style="left:1047px;top:1056px" width="18" height="18"><path d="M9 1 L16 5 L16 13 L9 17 L2 13 L2 5Z" fill="none" stroke="#fff" stroke-width="2"/><path d="M9 9 L9 17 M9 9 L2 5 M9 9 L16 5" stroke="#fff" stroke-width="2"/></svg>
<div class="a" style="left:1084px;top:1056px;width:18px;height:18px;background:#111"></div><svg class="a" style="left:1087px;top:1059px" width="12" height="12"><path d="M6 1 L11 3.5 L11 8.5 L6 11 L1 8.5 L1 3.5Z" fill="none" stroke="#fff" stroke-width="1.6"/></svg>
<div class="a" style="left:43px;top:1078px;width:28px;height:2px;background:#76b9ed"></div>
<div class="a" style="left:191px;top:1078px;width:28px;height:2px;background:#76b9ed"></div>
<div class="a" style="left:228px;top:1078px;width:28px;height:2px;background:#76b9ed"></div>
<div class="a" style="left:598px;top:1078px;width:28px;height:2px;background:#76b9ed"></div>
<div class="a" style="left:672px;top:1078px;width:28px;height:2px;background:#76b9ed"></div>
<div class="a" style="left:894px;top:1078px;width:28px;height:2px;background:#76b9ed"></div>
<div class="a" style="left:1005px;top:1078px;width:28px;height:2px;background:#76b9ed"></div>
<div class="a" style="left:1042px;top:1078px;width:28px;height:2px;background:#76b9ed"></div>
<div class="a" style="left:1079px;top:1078px;width:28px;height:2px;background:#76b9ed"></div>
<svg class="a" style="left:1606px;top:1058px" width="14" height="10"><path d="M1 8 L7 2 L13 8" stroke="#fff" stroke-width="1.3" fill="none"/></svg>
<svg class="a" style="left:1630px;top:1056px" width="17" height="16"><rect x="1" y="3" width="14" height="11" rx="3" fill="#e8e8e8"/><circle cx="5.5" cy="8.5" r="1.3" fill="#1c1c24"/><circle cx="10.5" cy="8.5" r="1.3" fill="#1c1c24"/><circle cx="14" cy="3" r="2.5" fill="#e04040"/></svg>
<svg class="a" style="left:1653px;top:1056px" width="17" height="17"><circle cx="8.5" cy="8.5" r="8" fill="#e94235"/><path d="M8.5 8.5 L1 12 A8 8 0 0 0 12 16Z" fill="#34a853"/><path d="M8.5 8.5 L12 16 A8 8 0 0 0 16.5 6Z" fill="#fbbc05"/><circle cx="8.5" cy="8.5" r="4" fill="#1c1c24"/><circle cx="8.5" cy="8.5" r="2.8" fill="#4285f4"/></svg>
<svg class="a" style="left:1678px;top:1056px" width="16" height="17"><path d="M8 1 L15 5 L15 12 L8 16 L1 12 L1 5Z" fill="none" stroke="#fff" stroke-width="1.4"/><path d="M8 8.5 L8 16 M8 8.5 L1 5 M8 8.5 L15 5" stroke="#fff" stroke-width="1.4"/></svg>
<svg class="a" style="left:1701px;top:1058px" width="18" height="12"><rect x="3" y="3" width="12" height="8" fill="none" stroke="#fff" stroke-width="1.2"/><rect x="15" y="5" width="2" height="4" fill="#fff"/><path d="M1 1 V5 M4 1 V5" stroke="#fff" stroke-width="1"/><rect x="5" y="5" width="5" height="4" fill="#fff"/></svg>
<svg class="a" style="left:1725px;top:1057px" width="17" height="14"><path d="M1 5 H4 L8 1 V13 L4 9 H1Z" fill="none" stroke="#fff" stroke-width="1.2"/><path d="M10 4 A4 4 0 0 1 10 10 M12 2 A7 7 0 0 1 12 12" stroke="#fff" stroke-width="1.2" fill="none"/></svg>
<svg class="a" style="left:1751px;top:1057px" width="16" height="14"><path d="M1 13 A12 12 0 0 1 13 1 M4 13 A9 9 0 0 1 13 4 M7 13 A6 6 0 0 1 13 7" stroke="#fff" stroke-width="1.2" fill="none"/><circle cx="12" cy="12" r="1.6" fill="#fff"/></svg>
<div class="t" style="left:1775px;top:1059px;font-size:12px;color:#fff">ENG</div>
<div class="t" style="left:1813px;top:1059px;font-size:12px;color:#fff">10:57 AM</div>
<svg class="a" style="left:1879px;top:1056px" width="16" height="16"><path d="M1 1 H15 V12 H9 L6 15 V12 H1Z" fill="#fff"/><path d="M4 4 H12 M4 6.5 H12 M4 9 H10" stroke="#1c1c24" stroke-width="1"/></svg>
<div class="a" style="left:1914px;top:1052px;width:1px;height:26px;background:#555"></div>

</body></html>
